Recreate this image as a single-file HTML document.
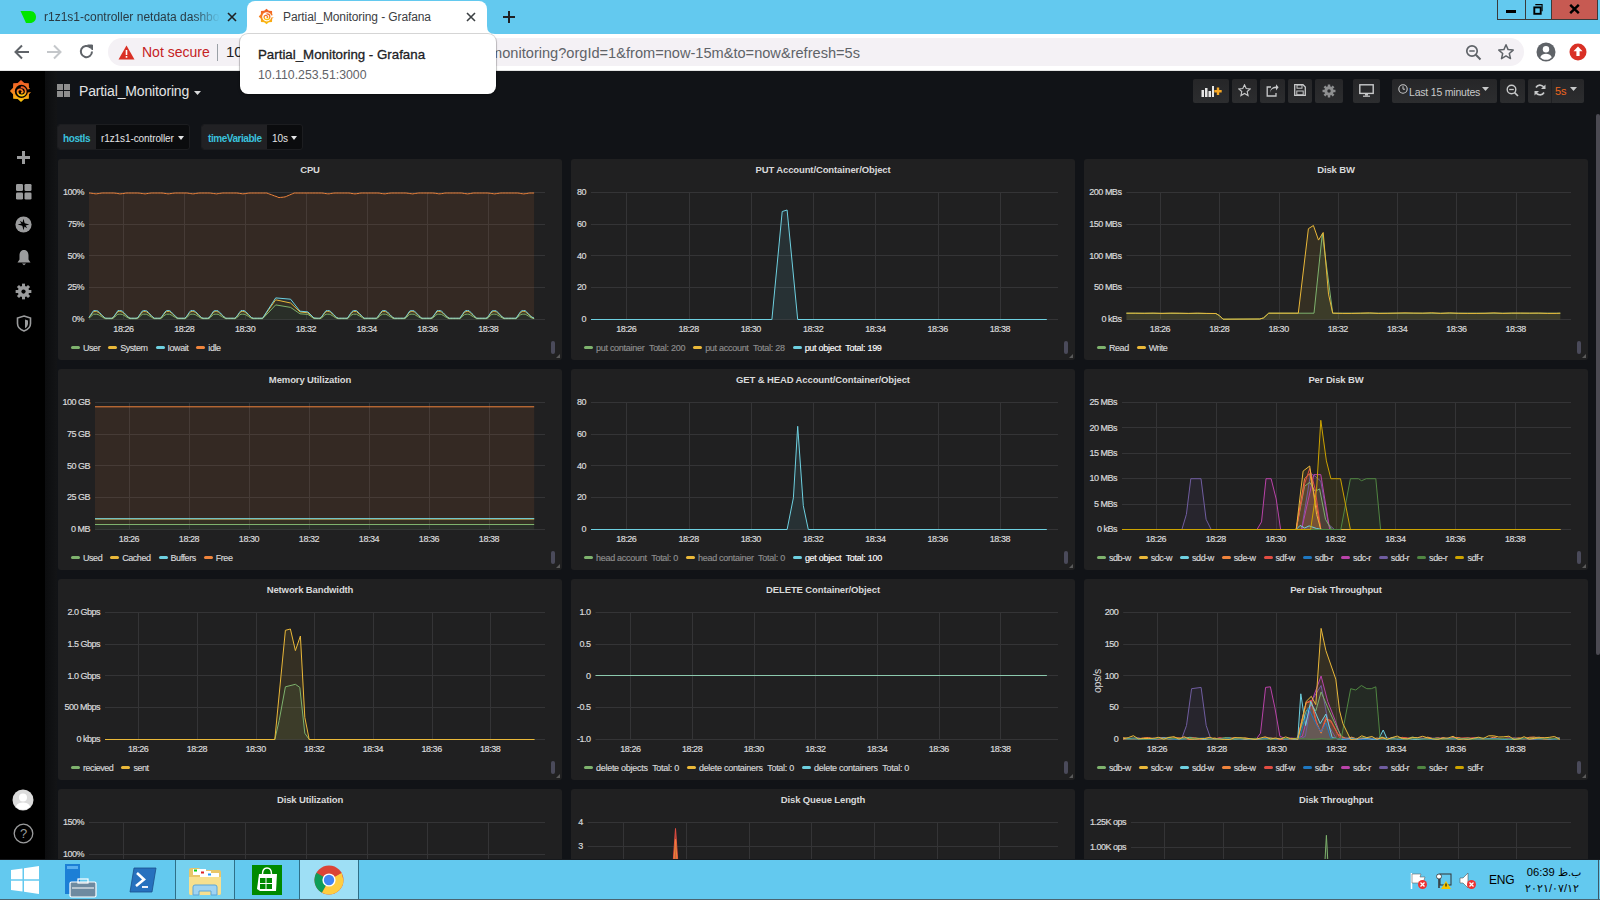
<!DOCTYPE html><html><head><meta charset="utf-8"><style>
*{box-sizing:border-box;margin:0;padding:0}
html,body{width:1600px;height:900px;overflow:hidden;background:#111317;font-family:"Liberation Sans", sans-serif}
.abs{position:absolute}
#tabs{position:absolute;left:0;top:0;width:1600px;height:34px;background:#63c9ef}
#toolbar{position:absolute;left:0;top:34px;width:1600px;height:37px;background:#fff;border-bottom:1px solid #e3e3e3}
#omni{position:absolute;left:108px;top:38px;width:1416px;height:28px;border-radius:14px;background:#f4f1f5}
#graf{position:absolute;left:0;top:71px;width:1600px;height:789px;background:#111317;overflow:hidden}
#side{position:absolute;left:0;top:71px;width:45px;height:789px;background:#000}
#sideshade{position:absolute;left:45px;top:71px;width:12px;height:789px;background:linear-gradient(90deg,#0c0d0f,#131416)}
.panel{position:absolute;background:#202021;border-radius:3px;overflow:hidden}
.ptitle{position:absolute;left:0;top:5.3px;width:100%;text-align:center;color:#d8d9da;font-weight:bold;font-size:9.5px;letter-spacing:-0.12px;line-height:12px}
.chart{position:absolute;left:0;top:0}
.g{stroke:#343436;stroke-width:1}
.yl{fill:#d8d9da;stroke:#d8d9da;stroke-width:0.2px;font-size:9px;letter-spacing:-0.5px;text-anchor:end;font-family:"Liberation Sans", sans-serif}
.xl{fill:#d8d9da;stroke:#d8d9da;stroke-width:0.2px;font-size:9px;letter-spacing:-0.45px;text-anchor:middle;font-family:"Liberation Sans", sans-serif}
.yrot{fill:#d8d9da;font-size:10.5px;letter-spacing:-0.2px;text-anchor:middle;font-family:"Liberation Sans", sans-serif}
.legend{position:absolute;left:13px;top:184px;height:11px;white-space:nowrap;font-size:9px;letter-spacing:-0.45px;color:#d8d9da;line-height:11px;-webkit-text-stroke:0.15px currentColor}
.li{display:inline-block;margin-right:8px}
.li.hid{color:#8e8e8e}
.li.bold{color:#fff}
.tot{font-weight:inherit;margin-left:4.5px}
.legend.w{letter-spacing:-0.28px}
.li i{display:inline-block;width:9px;height:3px;border-radius:2px;vertical-align:middle;margin-right:3px;position:relative;top:-1px}
.lscroll{position:absolute;left:493px;top:182px;width:4px;height:13px;border-radius:2px;background:#4a4a5a}
.resz{position:absolute;left:498px;top:195px;width:0;height:0;border-left:4px solid transparent;border-bottom:4px solid #5a5a5a}
.btn{position:absolute;top:79px;height:24px;border-radius:2px;background:linear-gradient(#262628,#2c2d2f);}
</style></head><body><div id="tabs"></div><svg class="abs" style="left:19px;top:10px" width="18" height="14" viewBox="0 0 18 14"><path d="M1.5 1 L11 1 C15 1 17 4 17 7 C17 10.5 14.5 13 11 13 L7 13 Z" fill="#00e600"/></svg><div class="abs" style="left:44px;top:9px;font-size:12px;line-height:16px;color:#2a3a44;white-space:nowrap;width:176px;overflow:hidden;-webkit-mask-image:linear-gradient(90deg,#000 85%,transparent)">r1z1s1-controller netdata dashboard</div><svg class="abs" style="left:227px;top:12px" width="10" height="10" viewBox="0 0 10 10"><path d="M1 1L9 9M9 1L1 9" stroke="#202124" stroke-width="1.6"/></svg><div class="abs" style="left:247px;top:1px;width:240px;height:33px;background:#fff;border-radius:8px 8px 0 0"></div><svg class="abs" style="left:239px;top:26px" width="8" height="8"><path d="M0 8 Q8 8 8 0 L8 8Z" fill="#fff"/></svg><svg class="abs" style="left:487px;top:26px" width="8" height="8"><path d="M0 0 Q0 8 8 8 L0 8Z" fill="#fff"/></svg><svg width="17" height="17" viewBox="0 0 24 25" style="position:absolute;left:258px;top:8px">
<defs><linearGradient id="lgt" x1="0" y1="0" x2="0" y2="1"><stop offset="0" stop-color="#f05a28"/><stop offset="0.5" stop-color="#f57f20"/><stop offset="1" stop-color="#fbca0a"/></linearGradient>
<mask id="mkt"><rect width="24" height="25" fill="#fff"/><circle cx="12.4" cy="12.9" r="6.8" fill="#000"/><path d="M17.5 11.5L24.5 9.5V13.5L18.5 14Z" fill="#000"/></mask></defs>
<path mask="url(#mkt)" fill="url(#lgt)" d="M12.00,1.00 L15.44,4.19 L20.13,4.37 L20.31,9.06 L23.50,12.50 L20.31,15.94 L20.13,20.63 L15.44,20.81 L12.00,24.00 L8.56,20.81 L3.87,20.63 L3.69,15.94 L0.50,12.50 L3.69,9.06 L3.87,4.37 L8.56,4.19Z"/>
<path d="M12.6 8.6 A4.3 4.3 0 1 1 8.4 13.6 A2.6 2.6 0 0 1 13.4 12.4 A1 1 0 0 1 12.8 14.2" fill="none" stroke="url(#lgt)" stroke-width="1.9" stroke-linecap="round"/>
</svg><div class="abs" style="left:283px;top:9px;font-size:12px;letter-spacing:-0.1px;line-height:16px;color:#3c4043;white-space:nowrap">Partial_Monitoring - Grafana</div><svg class="abs" style="left:466px;top:12px" width="10" height="10" viewBox="0 0 10 10"><path d="M1 1L9 9M9 1L1 9" stroke="#3c4043" stroke-width="1.6"/></svg><svg class="abs" style="left:502px;top:10px" width="14" height="14" viewBox="0 0 14 14"><path d="M7 1V13M1 7H13" stroke="#202124" stroke-width="2"/></svg><div class="abs" style="left:1497px;top:0;width:101px;height:20px;border:1px solid #3a3a3a;border-top:none;background:#63c9ef"></div><div class="abs" style="left:1525px;top:0;width:1px;height:20px;background:#3a3a3a"></div><div class="abs" style="left:1551px;top:0;width:46px;height:19px;background:#c75a52;border-left:1px solid #3a3a3a"></div><div class="abs" style="left:1506px;top:10px;width:10px;height:3px;background:#000"></div><svg class="abs" style="left:1532px;top:3px" width="12" height="12" viewBox="0 0 12 12"><rect x="2.3" y="4.4" width="6.4" height="6.4" fill="none" stroke="#000" stroke-width="1.9"/><path d="M3.3 1.6H10.1V8.2" fill="none" stroke="#000" stroke-width="1.1"/></svg><svg class="abs" style="left:1569px;top:4px" width="11" height="10" viewBox="0 0 11 10"><path d="M1.2 0.8L9.8 9.2M9.8 0.8L1.2 9.2" stroke="#000" stroke-width="2.4"/></svg><div id="toolbar"></div><svg class="abs" style="left:14px;top:44px" width="16" height="16" viewBox="0 0 16 16"><path d="M15 8H2M8 1.5L1.5 8L8 14.5" fill="none" stroke="#5f6368" stroke-width="2"/></svg><svg class="abs" style="left:46px;top:44px" width="16" height="16" viewBox="0 0 16 16"><path d="M1 8H14M8 1.5L14.5 8L8 14.5" fill="none" stroke="#c4c7ca" stroke-width="2"/></svg><svg class="abs" style="left:78px;top:43px" width="17" height="17" viewBox="0 0 17 17"><path d="M14 8.5A5.6 5.6 0 1 1 12.3 4.5" fill="none" stroke="#5f6368" stroke-width="2"/><path d="M9.5 2H14.5V7Z" fill="#5f6368" stroke="#5f6368" stroke-width="1"/></svg><div id="omni"></div><svg class="abs" style="left:118px;top:45px" width="17" height="15" viewBox="0 0 17 15"><path d="M8.5 0.5L16.5 14.5H0.5Z" fill="#d93025"/><rect x="7.7" y="5" width="1.6" height="5" fill="#fff"/><rect x="7.7" y="11" width="1.6" height="1.7" fill="#fff"/></svg><div class="abs" style="left:142px;top:43px;font-size:14px;line-height:18px;color:#c5221f;white-space:nowrap">Not secure</div><div class="abs" style="left:217px;top:44px;width:1px;height:17px;background:#9aa0a6"></div><div class="abs" style="left:226px;top:42px;font-size:15px;line-height:20px;color:#202124;white-space:nowrap">10</div><div class="abs" style="left:300px;top:42.5px;width:560px;text-align:right;font-size:14.6px;line-height:20px;color:#5f6368;white-space:nowrap">partial_monitoring?orgId=1&amp;from=now-15m&amp;to=now&amp;refresh=5s</div><svg class="abs" style="left:1465px;top:44px" width="17" height="17" viewBox="0 0 17 17"><circle cx="7" cy="7" r="5.2" fill="none" stroke="#5f6368" stroke-width="1.7"/><path d="M10.8 10.8L15.5 15.5" stroke="#5f6368" stroke-width="2"/><path d="M4.3 7H9.7" stroke="#5f6368" stroke-width="1.5"/></svg><svg class="abs" style="left:1497px;top:43px" width="18" height="18" viewBox="0 0 18 18"><path d="M9 1.8L11.1 6.6L16.2 7.1L12.3 10.5L13.5 15.6L9 12.9L4.5 15.6L5.7 10.5L1.8 7.1L6.9 6.6Z" fill="none" stroke="#5f6368" stroke-width="1.5" stroke-linejoin="round"/></svg><svg class="abs" style="left:1536px;top:42px" width="20" height="20" viewBox="0 0 20 20"><circle cx="10" cy="10" r="9.5" fill="#5f6368"/><circle cx="10" cy="7.3" r="3.2" fill="#fff"/><path d="M4.2 15.2C5.5 12.6 7.6 11.8 10 11.8C12.4 11.8 14.5 12.6 15.8 15.2C14.4 16.9 12.3 17.8 10 17.8C7.7 17.8 5.6 16.9 4.2 15.2Z" fill="#fff"/></svg><svg class="abs" style="left:1569px;top:43px" width="18" height="18" viewBox="0 0 18 18"><circle cx="9" cy="9" r="8.5" fill="#d93025"/><path d="M9 3.5L13.5 8.2H10.6V13H7.4V8.2H4.5Z" fill="#fff"/></svg><div id="graf"></div><div id="side"></div><div id="sideshade"></div><svg width="24" height="24" viewBox="0 0 24 25" style="position:absolute;left:9px;top:79px">
<defs><linearGradient id="lgs" x1="0" y1="0" x2="0" y2="1"><stop offset="0" stop-color="#f05a28"/><stop offset="0.5" stop-color="#f57f20"/><stop offset="1" stop-color="#fbca0a"/></linearGradient>
<mask id="mks"><rect width="24" height="25" fill="#fff"/><circle cx="12.4" cy="12.9" r="6.8" fill="#000"/><path d="M17.5 11.5L24.5 9.5V13.5L18.5 14Z" fill="#000"/></mask></defs>
<path mask="url(#mks)" fill="url(#lgs)" d="M12.00,1.00 L15.44,4.19 L20.13,4.37 L20.31,9.06 L23.50,12.50 L20.31,15.94 L20.13,20.63 L15.44,20.81 L12.00,24.00 L8.56,20.81 L3.87,20.63 L3.69,15.94 L0.50,12.50 L3.69,9.06 L3.87,4.37 L8.56,4.19Z"/>
<path d="M12.6 8.6 A4.3 4.3 0 1 1 8.4 13.6 A2.6 2.6 0 0 1 13.4 12.4 A1 1 0 0 1 12.8 14.2" fill="none" stroke="url(#lgs)" stroke-width="1.9" stroke-linecap="round"/>
</svg><svg class="abs" style="left:16px;top:150px" width="15" height="15" viewBox="0 0 15 15"><path d="M7.5 1V14M1 7.5H14" stroke="#9b9c9d" stroke-width="3"/></svg><svg class="abs" style="left:16px;top:184px" width="16" height="16" viewBox="0 0 16 16"><rect x="0" y="0" width="7" height="7" rx="1.3" fill="#9b9c9d"/><rect x="8.5" y="0" width="7" height="7" rx="1.3" fill="#9b9c9d"/><rect x="0" y="8.5" width="7" height="7" rx="1.3" fill="#9b9c9d"/><rect x="8.5" y="8.5" width="7" height="7" rx="1.3" fill="#9b9c9d"/></svg><svg class="abs" style="left:15px;top:216px" width="17" height="17" viewBox="0 0 16 16"><circle cx="8" cy="8" r="7.6" fill="#9b9c9d"/><path d="M8 2.5L9.1 6.9L13.5 8L9.1 9.1L8 13.5L6.9 9.1L2.5 8L6.9 6.9Z" fill="#000"/><path d="M4.5 4.5L9 7L11.5 11.5L7 9Z" fill="#000"/></svg><svg class="abs" style="left:16px;top:249px" width="16" height="17" viewBox="0 0 16 17"><path d="M8 1C4.8 1 3.5 3.5 3.5 6.5V10.5L1.5 13.5H14.5L12.5 10.5V6.5C12.5 3.5 11.2 1 8 1Z" fill="#9b9c9d"/><path d="M6 14.5H10L8 16.3Z" fill="#9b9c9d"/></svg><svg width="17" height="17" viewBox="0 0 16 16" style="position:absolute;left:15px;top:283px"><rect x="6.6" y="0.6" width="2.8" height="3.2" fill="#9b9c9d" transform="rotate(0 8 8)"/><rect x="6.6" y="0.6" width="2.8" height="3.2" fill="#9b9c9d" transform="rotate(45 8 8)"/><rect x="6.6" y="0.6" width="2.8" height="3.2" fill="#9b9c9d" transform="rotate(90 8 8)"/><rect x="6.6" y="0.6" width="2.8" height="3.2" fill="#9b9c9d" transform="rotate(135 8 8)"/><rect x="6.6" y="0.6" width="2.8" height="3.2" fill="#9b9c9d" transform="rotate(180 8 8)"/><rect x="6.6" y="0.6" width="2.8" height="3.2" fill="#9b9c9d" transform="rotate(225 8 8)"/><rect x="6.6" y="0.6" width="2.8" height="3.2" fill="#9b9c9d" transform="rotate(270 8 8)"/><rect x="6.6" y="0.6" width="2.8" height="3.2" fill="#9b9c9d" transform="rotate(315 8 8)"/><circle cx="8" cy="8" r="5.3" fill="#9b9c9d"/><circle cx="8" cy="8" r="2" fill="#000"/></svg><svg class="abs" style="left:16px;top:315px" width="16" height="17" viewBox="0 0 16 17"><path d="M8 1L14.5 3V8.5C14.5 12 11.5 14.8 8 16C4.5 14.8 1.5 12 1.5 8.5V3Z" fill="none" stroke="#9b9c9d" stroke-width="1.6"/><path d="M9 4.5L12 5.5V8.5C12 10.8 10.5 12.5 9 13.3Z" fill="#9b9c9d"/></svg><svg class="abs" style="left:12px;top:789px" width="22" height="22" viewBox="0 0 22 22"><circle cx="11" cy="11" r="10.5" fill="#dcdcdc"/><circle cx="11" cy="8.5" r="4" fill="#fff"/><path d="M3.8 17.5C5.5 14.5 8 13.6 11 13.6C14 13.6 16.5 14.5 18.2 17.5C16.5 19.5 14 20.8 11 20.8C8 20.8 5.5 19.5 3.8 17.5Z" fill="#fff"/></svg><svg class="abs" style="left:13px;top:823px" width="21" height="21" viewBox="0 0 21 21"><circle cx="10.5" cy="10.5" r="9.3" fill="none" stroke="#9b9c9d" stroke-width="1.3"/><text x="10.5" y="15" text-anchor="middle" font-size="13" fill="#9b9c9d" font-family="Liberation Sans">?</text></svg><svg class="abs" style="left:57px;top:84px" width="13" height="13" viewBox="0 0 13 13"><rect x="0" y="0" width="6" height="6" fill="#8e8e8e"/><rect x="7" y="0" width="6" height="6" fill="#8e8e8e"/><rect x="0" y="7" width="6" height="6" fill="#8e8e8e"/><rect x="7" y="7" width="6" height="6" fill="#8e8e8e"/></svg><div class="abs" style="left:79px;top:82px;font-size:14px;letter-spacing:-0.15px;line-height:18px;color:#e3e4e5;white-space:nowrap">Partial_Monitoring</div><svg class="abs" style="left:194px;top:91px" width="7" height="4"><path d="M0 0H7L3.5 4Z" fill="#d8d9da"/></svg><div class="btn" style="left:1193px;width:36px"></div><div class="btn" style="left:1232px;width:25px"></div><div class="btn" style="left:1260px;width:25px"></div><div class="btn" style="left:1288px;width:24px"></div><div class="btn" style="left:1315px;width:28px"></div><div class="btn" style="left:1353px;width:27px"></div><div class="btn" style="left:1392px;width:105px"></div><div class="btn" style="left:1500px;width:25px"></div><div class="btn" style="left:1528px;width:56px"></div><div class="abs" style="left:1551px;top:79px;width:1px;height:24px;background:#1f2023"></div><svg class="abs" style="left:1201px;top:85px" width="21" height="12" viewBox="0 0 21 12"><rect x="0.5" y="5" width="2.5" height="7" fill="#e6e6e6"/><rect x="4" y="3" width="2.5" height="9" fill="#e6e6e6"/><rect x="7.5" y="6" width="2.5" height="6" fill="#e6e6e6"/><rect x="11" y="1" width="2" height="11" fill="#e6e6e6"/><path d="M17 2.5V10M13.3 6.2H20.7" stroke="#f5a623" stroke-width="2.4"/></svg><svg class="abs" style="left:1238px;top:84px" width="13" height="13" viewBox="0 0 13 13"><path d="M6.5 0.8L8.2 4.5L12.2 4.9L9.2 7.5L10.1 11.6L6.5 9.5L2.9 11.6L3.8 7.5L0.8 4.9L4.8 4.5Z" fill="none" stroke="#c8c9ca" stroke-width="1.1"/></svg><svg class="abs" style="left:1266px;top:84px" width="13" height="13" viewBox="0 0 13 13"><path d="M5 3H1.2V12H10V9" fill="none" stroke="#c8c9ca" stroke-width="1.3"/><path d="M4 9C4.5 5.5 7 4.2 10 4.2V6.5L12.6 3.3L10 0.3V2.4C6 2.6 4 5.5 4 9Z" fill="#c8c9ca"/></svg><svg class="abs" style="left:1294px;top:84px" width="12" height="12" viewBox="0 0 12 12"><path d="M0.7 0.7H9L11.3 3V11.3H0.7Z" fill="none" stroke="#c8c9ca" stroke-width="1.3"/><rect x="3" y="1" width="5" height="3.2" fill="none" stroke="#c8c9ca" stroke-width="1"/><rect x="2.8" y="7" width="6.4" height="3.8" fill="none" stroke="#c8c9ca" stroke-width="1"/></svg><svg width="14" height="14" viewBox="0 0 16 16" style="position:absolute;left:1322px;top:84px"><rect x="6.6" y="0.6" width="2.8" height="3.2" fill="#8e8f90" transform="rotate(0 8 8)"/><rect x="6.6" y="0.6" width="2.8" height="3.2" fill="#8e8f90" transform="rotate(45 8 8)"/><rect x="6.6" y="0.6" width="2.8" height="3.2" fill="#8e8f90" transform="rotate(90 8 8)"/><rect x="6.6" y="0.6" width="2.8" height="3.2" fill="#8e8f90" transform="rotate(135 8 8)"/><rect x="6.6" y="0.6" width="2.8" height="3.2" fill="#8e8f90" transform="rotate(180 8 8)"/><rect x="6.6" y="0.6" width="2.8" height="3.2" fill="#8e8f90" transform="rotate(225 8 8)"/><rect x="6.6" y="0.6" width="2.8" height="3.2" fill="#8e8f90" transform="rotate(270 8 8)"/><rect x="6.6" y="0.6" width="2.8" height="3.2" fill="#8e8f90" transform="rotate(315 8 8)"/><circle cx="8" cy="8" r="5.3" fill="#8e8f90"/><circle cx="8" cy="8" r="2" fill="#2a2b2d"/></svg><svg class="abs" style="left:1359px;top:84px" width="15" height="13" viewBox="0 0 15 13"><rect x="0.8" y="0.8" width="13.4" height="8.6" fill="none" stroke="#c8c9ca" stroke-width="1.4"/><rect x="6" y="10" width="3" height="1.6" fill="#c8c9ca"/><rect x="4" y="11.6" width="7" height="1.2" fill="#c8c9ca"/></svg><svg class="abs" style="left:1398px;top:84px" width="10" height="10" viewBox="0 0 10 10"><circle cx="5" cy="5" r="4.2" fill="none" stroke="#c8c9ca" stroke-width="1.1"/><path d="M5 2.2V5.2H7" fill="none" stroke="#c8c9ca" stroke-width="1"/></svg><div class="abs" style="left:1409px;top:85.5px;font-size:10.5px;letter-spacing:-0.2px;line-height:13px;color:#c8c9ca;white-space:nowrap">Last 15 minutes</div><svg class="abs" style="left:1482px;top:87px" width="7" height="4"><path d="M0 0H7L3.5 4Z" fill="#c8c9ca"/></svg><svg class="abs" style="left:1506px;top:84px" width="13" height="13" viewBox="0 0 13 13"><circle cx="5.5" cy="5.5" r="4.3" fill="none" stroke="#c8c9ca" stroke-width="1.4"/><path d="M8.6 8.6L12 12" stroke="#c8c9ca" stroke-width="1.6"/><path d="M3.2 5.5H7.8" stroke="#c8c9ca" stroke-width="1.3"/></svg><svg class="abs" style="left:1534px;top:84px" width="12" height="12" viewBox="0 0 12 12"><path d="M10.3 4.5A4.5 4.5 0 0 0 2 3.5M1.7 7.5A4.5 4.5 0 0 0 10 8.5" fill="none" stroke="#c8c9ca" stroke-width="1.6"/><path d="M11.5 0.5V5H7Z" fill="#c8c9ca"/><path d="M0.5 11.5V7H5Z" fill="#c8c9ca"/></svg><div class="abs" style="left:1555px;top:84px;font-size:11px;line-height:14px;color:#f0661e;white-space:nowrap">5s</div><svg class="abs" style="left:1570px;top:87px" width="7" height="4"><path d="M0 0H7L3.5 4Z" fill="#c8c9ca"/></svg><div class="abs" style="left:57px;top:124px;width:133px;height:26px;border:1px solid #1c1d20;border-radius:3px;background:#0b0c0e;overflow:hidden"><div style="position:absolute;left:0;top:0;width:38px;height:26px;background:#212124"></div></div><div class="abs" style="left:63px;top:131.5px;font-size:10px;font-weight:bold;letter-spacing:-0.4px;line-height:13px;color:#3ac1dc">hostIs</div><div class="abs" style="left:101px;top:131.5px;font-size:10px;letter-spacing:-0.1px;line-height:13px;color:#e3e4e5;white-space:nowrap">r1z1s1-controller</div><svg class="abs" style="left:178px;top:136px" width="6" height="4"><path d="M0 0H6L3 4Z" fill="#e3e4e5"/></svg><div class="abs" style="left:201px;top:124px;width:102px;height:26px;border:1px solid #1c1d20;border-radius:3px;background:#0b0c0e;overflow:hidden"><div style="position:absolute;left:0;top:0;width:65px;height:26px;background:#212124"></div></div><div class="abs" style="left:208px;top:131.5px;font-size:10px;font-weight:bold;letter-spacing:-0.45px;line-height:13px;color:#3ac1dc;white-space:nowrap">timeVariable</div><div class="abs" style="left:272px;top:131.5px;font-size:10px;line-height:13px;color:#e3e4e5;white-space:nowrap">10s</div><svg class="abs" style="left:291px;top:136px" width="6" height="4"><path d="M0 0H6L3 4Z" fill="#e3e4e5"/></svg><div class="abs" style="left:1596px;top:114px;width:4px;height:541px;border-radius:2px;background:#4b4a52"></div><div class="panel" style="left:58px;top:159px;width:504px;height:201px"><div class="ptitle">CPU</div><svg class="chart" width="504" height="201" viewBox="0 0 504 201"><line x1="31" y1="33.5" x2="487" y2="33.5" class="g"/><text x="26" y="36.2" class="yl">100%</text><line x1="31" y1="65.5" x2="487" y2="65.5" class="g"/><text x="26" y="68.0" class="yl">75%</text><line x1="31" y1="96.5" x2="487" y2="96.5" class="g"/><text x="26" y="99.7" class="yl">50%</text><line x1="31" y1="128.5" x2="487" y2="128.5" class="g"/><text x="26" y="131.4" class="yl">25%</text><line x1="31" y1="160.5" x2="487" y2="160.5" class="g"/><text x="26" y="163.2" class="yl">0%</text><line x1="65.5" y1="33" x2="65.5" y2="160" class="g"/><text x="65.5" y="173" class="xl">18:26</text><line x1="126.5" y1="33" x2="126.5" y2="160" class="g"/><text x="126.3" y="173" class="xl">18:28</text><line x1="187.5" y1="33" x2="187.5" y2="160" class="g"/><text x="187.1" y="173" class="xl">18:30</text><line x1="248.5" y1="33" x2="248.5" y2="160" class="g"/><text x="247.9" y="173" class="xl">18:32</text><line x1="309.5" y1="33" x2="309.5" y2="160" class="g"/><text x="308.7" y="173" class="xl">18:34</text><line x1="369.5" y1="33" x2="369.5" y2="160" class="g"/><text x="369.5" y="173" class="xl">18:36</text><line x1="430.5" y1="33" x2="430.5" y2="160" class="g"/><text x="430.3" y="173" class="xl">18:38</text><path d="M31.0,160.5 L31.0,159.2 L32.5,157.9 L34.0,156.5 L35.6,155.2 L37.1,155.2 L38.6,155.2 L40.1,155.5 L41.6,156.4 L43.2,157.4 L44.7,158.3 L46.2,159.2 L47.7,159.7 L49.2,159.7 L50.8,159.7 L52.3,159.7 L53.8,159.7 L55.3,159.2 L56.8,157.9 L58.4,156.5 L59.9,155.2 L61.4,155.2 L62.9,155.2 L64.4,155.5 L66.0,156.4 L67.5,157.4 L69.0,158.3 L70.5,159.2 L72.0,159.7 L73.6,159.7 L75.1,159.7 L76.6,159.7 L78.1,159.7 L79.6,159.5 L81.2,158.1 L82.7,156.8 L84.2,155.4 L85.7,155.2 L87.2,155.2 L88.8,155.3 L90.3,156.3 L91.8,157.2 L93.3,158.1 L94.8,159.0 L96.4,159.7 L97.9,159.7 L99.4,159.7 L100.9,159.7 L102.4,159.7 L104.0,158.7 L105.5,157.3 L107.0,156.0 L108.5,155.2 L110.0,155.2 L111.6,155.2 L113.1,155.9 L114.6,156.8 L116.1,157.7 L117.6,158.6 L119.2,159.6 L120.7,159.7 L122.2,159.7 L123.7,159.7 L125.2,159.7 L126.8,159.7 L128.3,158.9 L129.8,157.6 L131.3,156.2 L132.8,155.2 L134.4,155.2 L135.9,155.2 L137.4,155.7 L138.9,156.6 L140.4,157.5 L142.0,158.5 L143.5,159.4 L145.0,159.7 L146.5,159.7 L148.0,159.7 L149.6,159.7 L151.1,159.5 L152.6,158.1 L154.1,156.8 L155.6,155.4 L157.2,155.2 L158.7,155.2 L160.2,155.3 L161.7,156.3 L163.2,157.2 L164.8,158.1 L166.3,159.0 L167.8,159.7 L169.3,159.7 L170.8,159.7 L172.4,159.7 L173.9,159.7 L175.4,159.7 L176.9,159.7 L178.4,158.9 L180.0,157.6 L181.5,156.2 L183.0,155.2 L184.5,155.2 L186.0,155.2 L187.6,155.7 L189.1,156.6 L190.6,157.5 L192.1,158.5 L193.6,159.4 L195.2,159.7 L196.7,159.7 L198.2,159.7 L199.7,159.7 L201.2,159.7 L201.2,159.7 L204.6,159.7 L217.7,145.9 L232.6,148.4 L242.0,154.8 L249.9,155.4 L256.0,159.6 L259.0,159.7 L260.5,159.7 L262.0,159.7 L263.6,158.9 L265.1,157.6 L266.6,156.2 L268.1,155.2 L269.6,155.2 L271.2,155.2 L272.7,155.7 L274.2,156.6 L275.7,157.5 L277.2,158.5 L278.8,159.4 L280.3,159.7 L281.8,159.7 L283.3,159.7 L284.8,159.7 L286.4,159.7 L287.9,159.7 L289.4,159.7 L290.9,158.4 L292.4,157.0 L294.0,155.7 L295.5,155.2 L297.0,155.2 L298.5,155.2 L300.0,156.1 L301.6,157.0 L303.1,157.9 L304.6,158.8 L306.1,159.7 L307.6,159.7 L309.2,159.7 L310.7,159.7 L312.2,159.7 L313.7,159.7 L315.2,159.7 L316.8,159.7 L318.3,159.7 L319.8,158.9 L321.3,157.6 L322.8,156.2 L324.4,155.2 L325.9,155.2 L327.4,155.2 L328.9,155.7 L330.4,156.6 L332.0,157.5 L333.5,158.5 L335.0,159.4 L336.5,159.7 L338.0,159.7 L339.6,159.7 L341.1,159.7 L342.6,159.7 L344.1,159.7 L345.6,159.7 L347.2,159.5 L348.7,158.1 L350.2,156.8 L351.7,155.4 L353.2,155.2 L354.8,155.2 L356.3,155.3 L357.8,156.3 L359.3,157.2 L360.8,158.1 L362.4,159.0 L363.9,159.7 L365.4,159.7 L366.9,159.7 L368.4,159.7 L370.0,159.7 L371.5,159.7 L373.0,159.7 L374.5,159.2 L376.0,157.9 L377.6,156.5 L379.1,155.2 L380.6,155.2 L382.1,155.2 L383.6,155.5 L385.2,156.4 L386.7,157.4 L388.2,158.3 L389.7,159.2 L391.2,159.7 L392.8,159.7 L394.3,159.7 L395.8,159.7 L397.3,159.7 L398.8,159.7 L400.4,159.7 L401.9,159.7 L403.4,158.4 L404.9,157.0 L406.4,155.7 L408.0,155.2 L409.5,155.2 L411.0,155.2 L412.5,156.1 L414.0,157.0 L415.6,157.9 L417.1,158.8 L418.6,159.7 L420.1,159.7 L421.6,159.7 L423.2,159.7 L424.7,159.7 L426.2,159.7 L427.7,159.7 L429.2,159.5 L430.8,158.1 L432.3,156.8 L433.8,155.4 L435.3,155.2 L436.8,155.2 L438.4,155.3 L439.9,156.3 L441.4,157.2 L442.9,158.1 L444.4,159.0 L446.0,159.7 L447.5,159.7 L449.0,159.7 L450.5,159.7 L452.0,159.7 L453.6,159.7 L455.1,159.7 L456.6,159.7 L458.1,159.7 L459.6,158.4 L461.2,157.0 L462.7,155.7 L464.2,155.2 L465.7,155.2 L467.2,155.2 L468.8,156.1 L470.3,157.0 L471.8,157.9 L473.3,158.8 L476.1,159.7 L476.1,160.5 Z" fill="#7EB26D" fill-opacity="0.1" stroke="none"/><path d="M31.0,158.6 L32.5,156.6 L34.0,154.6 L35.6,152.6 L37.1,152.6 L38.6,152.6 L40.1,153.2 L41.6,154.5 L43.2,155.9 L44.7,157.2 L46.2,158.5 L47.7,159.4 L49.2,159.4 L50.8,159.4 L52.3,159.4 L53.8,159.4 L55.3,158.6 L56.8,156.6 L58.4,154.6 L59.9,152.6 L61.4,152.6 L62.9,152.6 L64.4,153.2 L66.0,154.5 L67.5,155.9 L69.0,157.2 L70.5,158.5 L72.0,159.4 L73.6,159.4 L75.1,159.4 L76.6,159.4 L78.1,159.4 L79.6,159.0 L81.2,157.0 L82.7,155.0 L84.2,153.0 L85.7,152.6 L87.2,152.6 L88.8,152.9 L90.3,154.2 L91.8,155.6 L93.3,156.9 L94.8,158.3 L96.4,159.4 L97.9,159.4 L99.4,159.4 L100.9,159.4 L102.4,159.4 L104.0,157.8 L105.5,155.8 L107.0,153.8 L108.5,152.6 L110.0,152.6 L111.6,152.6 L113.1,153.7 L114.6,155.0 L116.1,156.4 L117.6,157.7 L119.2,159.1 L120.7,159.4 L122.2,159.4 L123.7,159.4 L125.2,159.4 L126.8,159.4 L128.3,158.2 L129.8,156.2 L131.3,154.2 L132.8,152.6 L134.4,152.6 L135.9,152.6 L137.4,153.4 L138.9,154.8 L140.4,156.1 L142.0,157.5 L143.5,158.8 L145.0,159.4 L146.5,159.4 L148.0,159.4 L149.6,159.4 L151.1,159.0 L152.6,157.0 L154.1,155.0 L155.6,153.0 L157.2,152.6 L158.7,152.6 L160.2,152.9 L161.7,154.2 L163.2,155.6 L164.8,156.9 L166.3,158.3 L167.8,159.4 L169.3,159.4 L170.8,159.4 L172.4,159.4 L173.9,159.4 L175.4,159.4 L176.9,159.4 L178.4,158.2 L180.0,156.2 L181.5,154.2 L183.0,152.6 L184.5,152.6 L186.0,152.6 L187.6,153.4 L189.1,154.8 L190.6,156.1 L192.1,157.5 L193.6,158.8 L195.2,159.4 L196.7,159.4 L198.2,159.4 L199.7,159.4 L201.2,159.4 L201.2,159.4 L204.6,159.4 L217.7,140.8 L232.6,144.0 L242.0,152.9 L249.9,153.8 L256.0,159.2 L259.0,159.4 L260.5,159.4 L262.0,159.4 L263.6,158.2 L265.1,156.2 L266.6,154.2 L268.1,152.6 L269.6,152.6 L271.2,152.6 L272.7,153.4 L274.2,154.8 L275.7,156.1 L277.2,157.5 L278.8,158.8 L280.3,159.4 L281.8,159.4 L283.3,159.4 L284.8,159.4 L286.4,159.4 L287.9,159.4 L289.4,159.4 L290.9,157.4 L292.4,155.4 L294.0,153.4 L295.5,152.6 L297.0,152.6 L298.5,152.6 L300.0,154.0 L301.6,155.3 L303.1,156.7 L304.6,158.0 L306.1,159.4 L307.6,159.4 L309.2,159.4 L310.7,159.4 L312.2,159.4 L313.7,159.4 L315.2,159.4 L316.8,159.4 L318.3,159.4 L319.8,158.2 L321.3,156.2 L322.8,154.2 L324.4,152.6 L325.9,152.6 L327.4,152.6 L328.9,153.4 L330.4,154.8 L332.0,156.1 L333.5,157.5 L335.0,158.8 L336.5,159.4 L338.0,159.4 L339.6,159.4 L341.1,159.4 L342.6,159.4 L344.1,159.4 L345.6,159.4 L347.2,159.0 L348.7,157.0 L350.2,155.0 L351.7,153.0 L353.2,152.6 L354.8,152.6 L356.3,152.9 L357.8,154.2 L359.3,155.6 L360.8,156.9 L362.4,158.3 L363.9,159.4 L365.4,159.4 L366.9,159.4 L368.4,159.4 L370.0,159.4 L371.5,159.4 L373.0,159.4 L374.5,158.6 L376.0,156.6 L377.6,154.6 L379.1,152.6 L380.6,152.6 L382.1,152.6 L383.6,153.2 L385.2,154.5 L386.7,155.9 L388.2,157.2 L389.7,158.5 L391.2,159.4 L392.8,159.4 L394.3,159.4 L395.8,159.4 L397.3,159.4 L398.8,159.4 L400.4,159.4 L401.9,159.4 L403.4,157.4 L404.9,155.4 L406.4,153.4 L408.0,152.6 L409.5,152.6 L411.0,152.6 L412.5,154.0 L414.0,155.3 L415.6,156.7 L417.1,158.0 L418.6,159.4 L420.1,159.4 L421.6,159.4 L423.2,159.4 L424.7,159.4 L426.2,159.4 L427.7,159.4 L429.2,159.0 L430.8,157.0 L432.3,155.0 L433.8,153.0 L435.3,152.6 L436.8,152.6 L438.4,152.9 L439.9,154.2 L441.4,155.6 L442.9,156.9 L444.4,158.3 L446.0,159.4 L447.5,159.4 L449.0,159.4 L450.5,159.4 L452.0,159.4 L453.6,159.4 L455.1,159.4 L456.6,159.4 L458.1,159.4 L459.6,157.4 L461.2,155.4 L462.7,153.4 L464.2,152.6 L465.7,152.6 L467.2,152.6 L468.8,154.0 L470.3,155.3 L471.8,156.7 L473.3,158.0 L476.1,159.4 L476.1,159.7 L473.3,158.8 L471.8,157.9 L470.3,157.0 L468.8,156.1 L467.2,155.2 L465.7,155.2 L464.2,155.2 L462.7,155.7 L461.2,157.0 L459.6,158.4 L458.1,159.7 L456.6,159.7 L455.1,159.7 L453.6,159.7 L452.0,159.7 L450.5,159.7 L449.0,159.7 L447.5,159.7 L446.0,159.7 L444.4,159.0 L442.9,158.1 L441.4,157.2 L439.9,156.3 L438.4,155.3 L436.8,155.2 L435.3,155.2 L433.8,155.4 L432.3,156.8 L430.8,158.1 L429.2,159.5 L427.7,159.7 L426.2,159.7 L424.7,159.7 L423.2,159.7 L421.6,159.7 L420.1,159.7 L418.6,159.7 L417.1,158.8 L415.6,157.9 L414.0,157.0 L412.5,156.1 L411.0,155.2 L409.5,155.2 L408.0,155.2 L406.4,155.7 L404.9,157.0 L403.4,158.4 L401.9,159.7 L400.4,159.7 L398.8,159.7 L397.3,159.7 L395.8,159.7 L394.3,159.7 L392.8,159.7 L391.2,159.7 L389.7,159.2 L388.2,158.3 L386.7,157.4 L385.2,156.4 L383.6,155.5 L382.1,155.2 L380.6,155.2 L379.1,155.2 L377.6,156.5 L376.0,157.9 L374.5,159.2 L373.0,159.7 L371.5,159.7 L370.0,159.7 L368.4,159.7 L366.9,159.7 L365.4,159.7 L363.9,159.7 L362.4,159.0 L360.8,158.1 L359.3,157.2 L357.8,156.3 L356.3,155.3 L354.8,155.2 L353.2,155.2 L351.7,155.4 L350.2,156.8 L348.7,158.1 L347.2,159.5 L345.6,159.7 L344.1,159.7 L342.6,159.7 L341.1,159.7 L339.6,159.7 L338.0,159.7 L336.5,159.7 L335.0,159.4 L333.5,158.5 L332.0,157.5 L330.4,156.6 L328.9,155.7 L327.4,155.2 L325.9,155.2 L324.4,155.2 L322.8,156.2 L321.3,157.6 L319.8,158.9 L318.3,159.7 L316.8,159.7 L315.2,159.7 L313.7,159.7 L312.2,159.7 L310.7,159.7 L309.2,159.7 L307.6,159.7 L306.1,159.7 L304.6,158.8 L303.1,157.9 L301.6,157.0 L300.0,156.1 L298.5,155.2 L297.0,155.2 L295.5,155.2 L294.0,155.7 L292.4,157.0 L290.9,158.4 L289.4,159.7 L287.9,159.7 L286.4,159.7 L284.8,159.7 L283.3,159.7 L281.8,159.7 L280.3,159.7 L278.8,159.4 L277.2,158.5 L275.7,157.5 L274.2,156.6 L272.7,155.7 L271.2,155.2 L269.6,155.2 L268.1,155.2 L266.6,156.2 L265.1,157.6 L263.6,158.9 L262.0,159.7 L260.5,159.7 L259.0,159.7 L256.0,159.6 L249.9,155.4 L242.0,154.8 L232.6,148.4 L217.7,145.9 L204.6,159.7 L201.2,159.7 L201.2,159.7 L199.7,159.7 L198.2,159.7 L196.7,159.7 L195.2,159.7 L193.6,159.4 L192.1,158.5 L190.6,157.5 L189.1,156.6 L187.6,155.7 L186.0,155.2 L184.5,155.2 L183.0,155.2 L181.5,156.2 L180.0,157.6 L178.4,158.9 L176.9,159.7 L175.4,159.7 L173.9,159.7 L172.4,159.7 L170.8,159.7 L169.3,159.7 L167.8,159.7 L166.3,159.0 L164.8,158.1 L163.2,157.2 L161.7,156.3 L160.2,155.3 L158.7,155.2 L157.2,155.2 L155.6,155.4 L154.1,156.8 L152.6,158.1 L151.1,159.5 L149.6,159.7 L148.0,159.7 L146.5,159.7 L145.0,159.7 L143.5,159.4 L142.0,158.5 L140.4,157.5 L138.9,156.6 L137.4,155.7 L135.9,155.2 L134.4,155.2 L132.8,155.2 L131.3,156.2 L129.8,157.6 L128.3,158.9 L126.8,159.7 L125.2,159.7 L123.7,159.7 L122.2,159.7 L120.7,159.7 L119.2,159.6 L117.6,158.6 L116.1,157.7 L114.6,156.8 L113.1,155.9 L111.6,155.2 L110.0,155.2 L108.5,155.2 L107.0,156.0 L105.5,157.3 L104.0,158.7 L102.4,159.7 L100.9,159.7 L99.4,159.7 L97.9,159.7 L96.4,159.7 L94.8,159.0 L93.3,158.1 L91.8,157.2 L90.3,156.3 L88.8,155.3 L87.2,155.2 L85.7,155.2 L84.2,155.4 L82.7,156.8 L81.2,158.1 L79.6,159.5 L78.1,159.7 L76.6,159.7 L75.1,159.7 L73.6,159.7 L72.0,159.7 L70.5,159.2 L69.0,158.3 L67.5,157.4 L66.0,156.4 L64.4,155.5 L62.9,155.2 L61.4,155.2 L59.9,155.2 L58.4,156.5 L56.8,157.9 L55.3,159.2 L53.8,159.7 L52.3,159.7 L50.8,159.7 L49.2,159.7 L47.7,159.7 L46.2,159.2 L44.7,158.3 L43.2,157.4 L41.6,156.4 L40.1,155.5 L38.6,155.2 L37.1,155.2 L35.6,155.2 L34.0,156.5 L32.5,157.9 L31.0,159.2 Z" fill="#EAB839" fill-opacity="0.1" stroke="none"/><path d="M31.0,158.3 L32.5,156.1 L34.0,153.9 L35.6,151.6 L37.1,151.6 L38.6,151.6 L40.1,152.2 L41.6,153.7 L43.2,155.3 L44.7,156.8 L46.2,158.3 L47.7,159.2 L49.2,159.2 L50.8,159.2 L52.3,159.2 L53.8,159.2 L55.3,158.3 L56.8,156.1 L58.4,153.9 L59.9,151.6 L61.4,151.6 L62.9,151.6 L64.4,152.2 L66.0,153.7 L67.5,155.3 L69.0,156.8 L70.5,158.3 L72.0,159.2 L73.6,159.2 L75.1,159.2 L76.6,159.2 L78.1,159.2 L79.6,158.8 L81.2,156.5 L82.7,154.3 L84.2,152.1 L85.7,151.6 L87.2,151.6 L88.8,151.9 L90.3,153.4 L91.8,155.0 L93.3,156.5 L94.8,158.0 L96.4,159.2 L97.9,159.2 L99.4,159.2 L100.9,159.2 L102.4,159.2 L104.0,157.4 L105.5,155.2 L107.0,153.0 L108.5,151.6 L110.0,151.6 L111.6,151.6 L113.1,152.8 L114.6,154.4 L116.1,155.9 L117.6,157.4 L119.2,158.9 L120.7,159.2 L122.2,159.2 L123.7,159.2 L125.2,159.2 L126.8,159.2 L128.3,157.9 L129.8,155.6 L131.3,153.4 L132.8,151.6 L134.4,151.6 L135.9,151.6 L137.4,152.5 L138.9,154.0 L140.4,155.6 L142.0,157.1 L143.5,158.6 L145.0,159.2 L146.5,159.2 L148.0,159.2 L149.6,159.2 L151.1,158.8 L152.6,156.5 L154.1,154.3 L155.6,152.1 L157.2,151.6 L158.7,151.6 L160.2,151.9 L161.7,153.4 L163.2,155.0 L164.8,156.5 L166.3,158.0 L167.8,159.2 L169.3,159.2 L170.8,159.2 L172.4,159.2 L173.9,159.2 L175.4,159.2 L176.9,159.2 L178.4,157.9 L180.0,155.6 L181.5,153.4 L183.0,151.6 L184.5,151.6 L186.0,151.6 L187.6,152.5 L189.1,154.0 L190.6,155.6 L192.1,157.1 L193.6,158.6 L195.2,159.2 L196.7,159.2 L198.2,159.2 L199.7,159.2 L201.2,159.2 L201.2,159.2 L204.6,159.2 L217.7,138.9 L232.6,140.2 L242.0,152.2 L249.9,152.9 L256.0,159.0 L259.0,159.2 L260.5,159.2 L262.0,159.2 L263.6,157.9 L265.1,155.6 L266.6,153.4 L268.1,151.6 L269.6,151.6 L271.2,151.6 L272.7,152.5 L274.2,154.0 L275.7,155.6 L277.2,157.1 L278.8,158.6 L280.3,159.2 L281.8,159.2 L283.3,159.2 L284.8,159.2 L286.4,159.2 L287.9,159.2 L289.4,159.2 L290.9,157.0 L292.4,154.7 L294.0,152.5 L295.5,151.6 L297.0,151.6 L298.5,151.6 L300.0,153.1 L301.6,154.7 L303.1,156.2 L304.6,157.7 L306.1,159.2 L307.6,159.2 L309.2,159.2 L310.7,159.2 L312.2,159.2 L313.7,159.2 L315.2,159.2 L316.8,159.2 L318.3,159.2 L319.8,157.9 L321.3,155.6 L322.8,153.4 L324.4,151.6 L325.9,151.6 L327.4,151.6 L328.9,152.5 L330.4,154.0 L332.0,155.6 L333.5,157.1 L335.0,158.6 L336.5,159.2 L338.0,159.2 L339.6,159.2 L341.1,159.2 L342.6,159.2 L344.1,159.2 L345.6,159.2 L347.2,158.8 L348.7,156.5 L350.2,154.3 L351.7,152.1 L353.2,151.6 L354.8,151.6 L356.3,151.9 L357.8,153.4 L359.3,155.0 L360.8,156.5 L362.4,158.0 L363.9,159.2 L365.4,159.2 L366.9,159.2 L368.4,159.2 L370.0,159.2 L371.5,159.2 L373.0,159.2 L374.5,158.3 L376.0,156.1 L377.6,153.9 L379.1,151.6 L380.6,151.6 L382.1,151.6 L383.6,152.2 L385.2,153.7 L386.7,155.3 L388.2,156.8 L389.7,158.3 L391.2,159.2 L392.8,159.2 L394.3,159.2 L395.8,159.2 L397.3,159.2 L398.8,159.2 L400.4,159.2 L401.9,159.2 L403.4,157.0 L404.9,154.7 L406.4,152.5 L408.0,151.6 L409.5,151.6 L411.0,151.6 L412.5,153.1 L414.0,154.7 L415.6,156.2 L417.1,157.7 L418.6,159.2 L420.1,159.2 L421.6,159.2 L423.2,159.2 L424.7,159.2 L426.2,159.2 L427.7,159.2 L429.2,158.8 L430.8,156.5 L432.3,154.3 L433.8,152.1 L435.3,151.6 L436.8,151.6 L438.4,151.9 L439.9,153.4 L441.4,155.0 L442.9,156.5 L444.4,158.0 L446.0,159.2 L447.5,159.2 L449.0,159.2 L450.5,159.2 L452.0,159.2 L453.6,159.2 L455.1,159.2 L456.6,159.2 L458.1,159.2 L459.6,157.0 L461.2,154.7 L462.7,152.5 L464.2,151.6 L465.7,151.6 L467.2,151.6 L468.8,153.1 L470.3,154.7 L471.8,156.2 L473.3,157.7 L476.1,159.2 L476.1,159.4 L473.3,158.0 L471.8,156.7 L470.3,155.3 L468.8,154.0 L467.2,152.6 L465.7,152.6 L464.2,152.6 L462.7,153.4 L461.2,155.4 L459.6,157.4 L458.1,159.4 L456.6,159.4 L455.1,159.4 L453.6,159.4 L452.0,159.4 L450.5,159.4 L449.0,159.4 L447.5,159.4 L446.0,159.4 L444.4,158.3 L442.9,156.9 L441.4,155.6 L439.9,154.2 L438.4,152.9 L436.8,152.6 L435.3,152.6 L433.8,153.0 L432.3,155.0 L430.8,157.0 L429.2,159.0 L427.7,159.4 L426.2,159.4 L424.7,159.4 L423.2,159.4 L421.6,159.4 L420.1,159.4 L418.6,159.4 L417.1,158.0 L415.6,156.7 L414.0,155.3 L412.5,154.0 L411.0,152.6 L409.5,152.6 L408.0,152.6 L406.4,153.4 L404.9,155.4 L403.4,157.4 L401.9,159.4 L400.4,159.4 L398.8,159.4 L397.3,159.4 L395.8,159.4 L394.3,159.4 L392.8,159.4 L391.2,159.4 L389.7,158.5 L388.2,157.2 L386.7,155.9 L385.2,154.5 L383.6,153.2 L382.1,152.6 L380.6,152.6 L379.1,152.6 L377.6,154.6 L376.0,156.6 L374.5,158.6 L373.0,159.4 L371.5,159.4 L370.0,159.4 L368.4,159.4 L366.9,159.4 L365.4,159.4 L363.9,159.4 L362.4,158.3 L360.8,156.9 L359.3,155.6 L357.8,154.2 L356.3,152.9 L354.8,152.6 L353.2,152.6 L351.7,153.0 L350.2,155.0 L348.7,157.0 L347.2,159.0 L345.6,159.4 L344.1,159.4 L342.6,159.4 L341.1,159.4 L339.6,159.4 L338.0,159.4 L336.5,159.4 L335.0,158.8 L333.5,157.5 L332.0,156.1 L330.4,154.8 L328.9,153.4 L327.4,152.6 L325.9,152.6 L324.4,152.6 L322.8,154.2 L321.3,156.2 L319.8,158.2 L318.3,159.4 L316.8,159.4 L315.2,159.4 L313.7,159.4 L312.2,159.4 L310.7,159.4 L309.2,159.4 L307.6,159.4 L306.1,159.4 L304.6,158.0 L303.1,156.7 L301.6,155.3 L300.0,154.0 L298.5,152.6 L297.0,152.6 L295.5,152.6 L294.0,153.4 L292.4,155.4 L290.9,157.4 L289.4,159.4 L287.9,159.4 L286.4,159.4 L284.8,159.4 L283.3,159.4 L281.8,159.4 L280.3,159.4 L278.8,158.8 L277.2,157.5 L275.7,156.1 L274.2,154.8 L272.7,153.4 L271.2,152.6 L269.6,152.6 L268.1,152.6 L266.6,154.2 L265.1,156.2 L263.6,158.2 L262.0,159.4 L260.5,159.4 L259.0,159.4 L256.0,159.2 L249.9,153.8 L242.0,152.9 L232.6,144.0 L217.7,140.8 L204.6,159.4 L201.2,159.4 L201.2,159.4 L199.7,159.4 L198.2,159.4 L196.7,159.4 L195.2,159.4 L193.6,158.8 L192.1,157.5 L190.6,156.1 L189.1,154.8 L187.6,153.4 L186.0,152.6 L184.5,152.6 L183.0,152.6 L181.5,154.2 L180.0,156.2 L178.4,158.2 L176.9,159.4 L175.4,159.4 L173.9,159.4 L172.4,159.4 L170.8,159.4 L169.3,159.4 L167.8,159.4 L166.3,158.3 L164.8,156.9 L163.2,155.6 L161.7,154.2 L160.2,152.9 L158.7,152.6 L157.2,152.6 L155.6,153.0 L154.1,155.0 L152.6,157.0 L151.1,159.0 L149.6,159.4 L148.0,159.4 L146.5,159.4 L145.0,159.4 L143.5,158.8 L142.0,157.5 L140.4,156.1 L138.9,154.8 L137.4,153.4 L135.9,152.6 L134.4,152.6 L132.8,152.6 L131.3,154.2 L129.8,156.2 L128.3,158.2 L126.8,159.4 L125.2,159.4 L123.7,159.4 L122.2,159.4 L120.7,159.4 L119.2,159.1 L117.6,157.7 L116.1,156.4 L114.6,155.0 L113.1,153.7 L111.6,152.6 L110.0,152.6 L108.5,152.6 L107.0,153.8 L105.5,155.8 L104.0,157.8 L102.4,159.4 L100.9,159.4 L99.4,159.4 L97.9,159.4 L96.4,159.4 L94.8,158.3 L93.3,156.9 L91.8,155.6 L90.3,154.2 L88.8,152.9 L87.2,152.6 L85.7,152.6 L84.2,153.0 L82.7,155.0 L81.2,157.0 L79.6,159.0 L78.1,159.4 L76.6,159.4 L75.1,159.4 L73.6,159.4 L72.0,159.4 L70.5,158.5 L69.0,157.2 L67.5,155.9 L66.0,154.5 L64.4,153.2 L62.9,152.6 L61.4,152.6 L59.9,152.6 L58.4,154.6 L56.8,156.6 L55.3,158.6 L53.8,159.4 L52.3,159.4 L50.8,159.4 L49.2,159.4 L47.7,159.4 L46.2,158.5 L44.7,157.2 L43.2,155.9 L41.6,154.5 L40.1,153.2 L38.6,152.6 L37.1,152.6 L35.6,152.6 L34.0,154.6 L32.5,156.6 L31.0,158.6 Z" fill="#6ED0E0" fill-opacity="0.1" stroke="none"/><path d="M31.0,34.0 L32.5,34.1 L34.0,34.3 L35.6,34.5 L37.1,34.8 L38.6,34.8 L40.1,34.6 L41.6,34.4 L43.2,34.1 L44.7,34.0 L46.2,34.0 L47.7,34.0 L49.2,34.0 L50.8,34.0 L52.3,34.0 L53.8,34.0 L55.3,34.0 L56.8,34.1 L58.4,34.3 L59.9,34.5 L61.4,34.8 L62.9,34.8 L64.4,34.6 L66.0,34.4 L67.5,34.1 L69.0,34.0 L70.5,34.0 L72.0,34.0 L73.6,34.0 L75.1,34.0 L76.6,34.0 L78.1,34.0 L79.6,34.0 L81.2,34.1 L82.7,34.3 L84.2,34.5 L85.7,34.7 L87.2,34.9 L88.8,34.6 L90.3,34.4 L91.8,34.2 L93.3,34.0 L94.8,34.0 L96.4,34.0 L97.9,34.0 L99.4,34.0 L100.9,34.0 L102.4,34.0 L104.0,34.0 L105.5,34.2 L107.0,34.4 L108.5,34.6 L110.0,34.9 L111.6,34.7 L113.1,34.5 L114.6,34.3 L116.1,34.1 L117.6,34.0 L119.2,34.0 L120.7,34.0 L122.2,34.0 L123.7,34.0 L125.2,34.0 L126.8,34.0 L128.3,34.0 L129.8,34.1 L131.3,34.4 L132.8,34.6 L134.4,34.8 L135.9,34.8 L137.4,34.5 L138.9,34.3 L140.4,34.1 L142.0,34.0 L143.5,34.0 L145.0,34.0 L146.5,34.0 L148.0,34.0 L149.6,34.0 L151.1,34.0 L152.6,34.1 L154.1,34.3 L155.6,34.5 L157.2,34.7 L158.7,34.9 L160.2,34.6 L161.7,34.4 L163.2,34.2 L164.8,34.0 L166.3,34.0 L167.8,34.0 L169.3,34.0 L170.8,34.0 L172.4,34.0 L173.9,34.0 L175.4,34.0 L176.9,34.0 L178.4,34.0 L180.0,34.1 L181.5,34.4 L183.0,34.6 L184.5,34.8 L186.0,34.8 L187.6,34.5 L189.1,34.3 L190.6,34.1 L192.1,34.0 L193.6,34.0 L195.2,34.0 L196.7,34.0 L198.2,34.0 L199.7,34.0 L201.2,34.0 L202.8,34.0 L204.3,34.0 L205.8,34.0 L207.3,34.0 L208.8,34.0 L210.4,34.6 L211.9,35.2 L213.4,35.7 L214.9,36.3 L216.4,36.9 L218.0,37.4 L219.5,38.0 L221.0,38.6 L222.5,38.4 L224.0,38.3 L225.6,38.1 L227.1,37.9 L228.6,37.3 L230.1,36.6 L231.6,36.0 L233.2,35.3 L234.7,34.7 L236.2,34.0 L237.7,34.0 L239.2,34.0 L240.8,34.0 L242.3,34.0 L243.8,34.0 L245.3,34.0 L246.8,34.0 L248.4,34.0 L249.9,34.0 L251.4,34.0 L252.9,34.0 L254.4,34.0 L256.0,34.0 L257.5,34.0 L259.0,34.0 L260.5,34.0 L262.0,34.0 L263.6,34.0 L265.1,34.1 L266.6,34.4 L268.1,34.6 L269.6,34.8 L271.2,34.8 L272.7,34.5 L274.2,34.3 L275.7,34.1 L277.2,34.0 L278.8,34.0 L280.3,34.0 L281.8,34.0 L283.3,34.0 L284.8,34.0 L286.4,34.0 L287.9,34.0 L289.4,34.0 L290.9,34.0 L292.4,34.2 L294.0,34.5 L295.5,34.7 L297.0,34.9 L298.5,34.7 L300.0,34.5 L301.6,34.2 L303.1,34.0 L304.6,34.0 L306.1,34.0 L307.6,34.0 L309.2,34.0 L310.7,34.0 L312.2,34.0 L313.7,34.0 L315.2,34.0 L316.8,34.0 L318.3,34.0 L319.8,34.0 L321.3,34.1 L322.8,34.4 L324.4,34.6 L325.9,34.8 L327.4,34.8 L328.9,34.5 L330.4,34.3 L332.0,34.1 L333.5,34.0 L335.0,34.0 L336.5,34.0 L338.0,34.0 L339.6,34.0 L341.1,34.0 L342.6,34.0 L344.1,34.0 L345.6,34.0 L347.2,34.0 L348.7,34.1 L350.2,34.3 L351.7,34.5 L353.2,34.7 L354.8,34.9 L356.3,34.6 L357.8,34.4 L359.3,34.2 L360.8,34.0 L362.4,34.0 L363.9,34.0 L365.4,34.0 L366.9,34.0 L368.4,34.0 L370.0,34.0 L371.5,34.0 L373.0,34.0 L374.5,34.0 L376.0,34.1 L377.6,34.3 L379.1,34.5 L380.6,34.8 L382.1,34.8 L383.6,34.6 L385.2,34.4 L386.7,34.1 L388.2,34.0 L389.7,34.0 L391.2,34.0 L392.8,34.0 L394.3,34.0 L395.8,34.0 L397.3,34.0 L398.8,34.0 L400.4,34.0 L401.9,34.0 L403.4,34.0 L404.9,34.2 L406.4,34.5 L408.0,34.7 L409.5,34.9 L411.0,34.7 L412.5,34.5 L414.0,34.2 L415.6,34.0 L417.1,34.0 L418.6,34.0 L420.1,34.0 L421.6,34.0 L423.2,34.0 L424.7,34.0 L426.2,34.0 L427.7,34.0 L429.2,34.0 L430.8,34.1 L432.3,34.3 L433.8,34.5 L435.3,34.7 L436.8,34.9 L438.4,34.6 L439.9,34.4 L441.4,34.2 L442.9,34.0 L444.4,34.0 L446.0,34.0 L447.5,34.0 L449.0,34.0 L450.5,34.0 L452.0,34.0 L453.6,34.0 L455.1,34.0 L456.6,34.0 L458.1,34.0 L459.6,34.0 L461.2,34.2 L462.7,34.5 L464.2,34.7 L465.7,34.9 L467.2,34.7 L468.8,34.5 L470.3,34.2 L471.8,34.0 L473.3,34.0 L476.1,34.0 L476.1,159.2 L473.3,157.7 L471.8,156.2 L470.3,154.7 L468.8,153.1 L467.2,151.6 L465.7,151.6 L464.2,151.6 L462.7,152.5 L461.2,154.7 L459.6,157.0 L458.1,159.2 L456.6,159.2 L455.1,159.2 L453.6,159.2 L452.0,159.2 L450.5,159.2 L449.0,159.2 L447.5,159.2 L446.0,159.2 L444.4,158.0 L442.9,156.5 L441.4,155.0 L439.9,153.4 L438.4,151.9 L436.8,151.6 L435.3,151.6 L433.8,152.1 L432.3,154.3 L430.8,156.5 L429.2,158.8 L427.7,159.2 L426.2,159.2 L424.7,159.2 L423.2,159.2 L421.6,159.2 L420.1,159.2 L418.6,159.2 L417.1,157.7 L415.6,156.2 L414.0,154.7 L412.5,153.1 L411.0,151.6 L409.5,151.6 L408.0,151.6 L406.4,152.5 L404.9,154.7 L403.4,157.0 L401.9,159.2 L400.4,159.2 L398.8,159.2 L397.3,159.2 L395.8,159.2 L394.3,159.2 L392.8,159.2 L391.2,159.2 L389.7,158.3 L388.2,156.8 L386.7,155.3 L385.2,153.7 L383.6,152.2 L382.1,151.6 L380.6,151.6 L379.1,151.6 L377.6,153.9 L376.0,156.1 L374.5,158.3 L373.0,159.2 L371.5,159.2 L370.0,159.2 L368.4,159.2 L366.9,159.2 L365.4,159.2 L363.9,159.2 L362.4,158.0 L360.8,156.5 L359.3,155.0 L357.8,153.4 L356.3,151.9 L354.8,151.6 L353.2,151.6 L351.7,152.1 L350.2,154.3 L348.7,156.5 L347.2,158.8 L345.6,159.2 L344.1,159.2 L342.6,159.2 L341.1,159.2 L339.6,159.2 L338.0,159.2 L336.5,159.2 L335.0,158.6 L333.5,157.1 L332.0,155.6 L330.4,154.0 L328.9,152.5 L327.4,151.6 L325.9,151.6 L324.4,151.6 L322.8,153.4 L321.3,155.6 L319.8,157.9 L318.3,159.2 L316.8,159.2 L315.2,159.2 L313.7,159.2 L312.2,159.2 L310.7,159.2 L309.2,159.2 L307.6,159.2 L306.1,159.2 L304.6,157.7 L303.1,156.2 L301.6,154.7 L300.0,153.1 L298.5,151.6 L297.0,151.6 L295.5,151.6 L294.0,152.5 L292.4,154.7 L290.9,157.0 L289.4,159.2 L287.9,159.2 L286.4,159.2 L284.8,159.2 L283.3,159.2 L281.8,159.2 L280.3,159.2 L278.8,158.6 L277.2,157.1 L275.7,155.6 L274.2,154.0 L272.7,152.5 L271.2,151.6 L269.6,151.6 L268.1,151.6 L266.6,153.4 L265.1,155.6 L263.6,157.9 L262.0,159.2 L260.5,159.2 L259.0,159.2 L256.0,159.0 L249.9,152.9 L242.0,152.2 L232.6,140.2 L217.7,138.9 L204.6,159.2 L201.2,159.2 L201.2,159.2 L199.7,159.2 L198.2,159.2 L196.7,159.2 L195.2,159.2 L193.6,158.6 L192.1,157.1 L190.6,155.6 L189.1,154.0 L187.6,152.5 L186.0,151.6 L184.5,151.6 L183.0,151.6 L181.5,153.4 L180.0,155.6 L178.4,157.9 L176.9,159.2 L175.4,159.2 L173.9,159.2 L172.4,159.2 L170.8,159.2 L169.3,159.2 L167.8,159.2 L166.3,158.0 L164.8,156.5 L163.2,155.0 L161.7,153.4 L160.2,151.9 L158.7,151.6 L157.2,151.6 L155.6,152.1 L154.1,154.3 L152.6,156.5 L151.1,158.8 L149.6,159.2 L148.0,159.2 L146.5,159.2 L145.0,159.2 L143.5,158.6 L142.0,157.1 L140.4,155.6 L138.9,154.0 L137.4,152.5 L135.9,151.6 L134.4,151.6 L132.8,151.6 L131.3,153.4 L129.8,155.6 L128.3,157.9 L126.8,159.2 L125.2,159.2 L123.7,159.2 L122.2,159.2 L120.7,159.2 L119.2,158.9 L117.6,157.4 L116.1,155.9 L114.6,154.4 L113.1,152.8 L111.6,151.6 L110.0,151.6 L108.5,151.6 L107.0,153.0 L105.5,155.2 L104.0,157.4 L102.4,159.2 L100.9,159.2 L99.4,159.2 L97.9,159.2 L96.4,159.2 L94.8,158.0 L93.3,156.5 L91.8,155.0 L90.3,153.4 L88.8,151.9 L87.2,151.6 L85.7,151.6 L84.2,152.1 L82.7,154.3 L81.2,156.5 L79.6,158.8 L78.1,159.2 L76.6,159.2 L75.1,159.2 L73.6,159.2 L72.0,159.2 L70.5,158.3 L69.0,156.8 L67.5,155.3 L66.0,153.7 L64.4,152.2 L62.9,151.6 L61.4,151.6 L59.9,151.6 L58.4,153.9 L56.8,156.1 L55.3,158.3 L53.8,159.2 L52.3,159.2 L50.8,159.2 L49.2,159.2 L47.7,159.2 L46.2,158.3 L44.7,156.8 L43.2,155.3 L41.6,153.7 L40.1,152.2 L38.6,151.6 L37.1,151.6 L35.6,151.6 L34.0,153.9 L32.5,156.1 L31.0,158.3 Z" fill="#EF843C" fill-opacity="0.1" stroke="none"/><path d="M31.0,159.2 L32.5,157.9 L34.0,156.5 L35.6,155.2 L37.1,155.2 L38.6,155.2 L40.1,155.5 L41.6,156.4 L43.2,157.4 L44.7,158.3 L46.2,159.2 L47.7,159.7 L49.2,159.7 L50.8,159.7 L52.3,159.7 L53.8,159.7 L55.3,159.2 L56.8,157.9 L58.4,156.5 L59.9,155.2 L61.4,155.2 L62.9,155.2 L64.4,155.5 L66.0,156.4 L67.5,157.4 L69.0,158.3 L70.5,159.2 L72.0,159.7 L73.6,159.7 L75.1,159.7 L76.6,159.7 L78.1,159.7 L79.6,159.5 L81.2,158.1 L82.7,156.8 L84.2,155.4 L85.7,155.2 L87.2,155.2 L88.8,155.3 L90.3,156.3 L91.8,157.2 L93.3,158.1 L94.8,159.0 L96.4,159.7 L97.9,159.7 L99.4,159.7 L100.9,159.7 L102.4,159.7 L104.0,158.7 L105.5,157.3 L107.0,156.0 L108.5,155.2 L110.0,155.2 L111.6,155.2 L113.1,155.9 L114.6,156.8 L116.1,157.7 L117.6,158.6 L119.2,159.6 L120.7,159.7 L122.2,159.7 L123.7,159.7 L125.2,159.7 L126.8,159.7 L128.3,158.9 L129.8,157.6 L131.3,156.2 L132.8,155.2 L134.4,155.2 L135.9,155.2 L137.4,155.7 L138.9,156.6 L140.4,157.5 L142.0,158.5 L143.5,159.4 L145.0,159.7 L146.5,159.7 L148.0,159.7 L149.6,159.7 L151.1,159.5 L152.6,158.1 L154.1,156.8 L155.6,155.4 L157.2,155.2 L158.7,155.2 L160.2,155.3 L161.7,156.3 L163.2,157.2 L164.8,158.1 L166.3,159.0 L167.8,159.7 L169.3,159.7 L170.8,159.7 L172.4,159.7 L173.9,159.7 L175.4,159.7 L176.9,159.7 L178.4,158.9 L180.0,157.6 L181.5,156.2 L183.0,155.2 L184.5,155.2 L186.0,155.2 L187.6,155.7 L189.1,156.6 L190.6,157.5 L192.1,158.5 L193.6,159.4 L195.2,159.7 L196.7,159.7 L198.2,159.7 L199.7,159.7 L201.2,159.7 L201.2,159.7 L204.6,159.7 L217.7,145.9 L232.6,148.4 L242.0,154.8 L249.9,155.4 L256.0,159.6 L259.0,159.7 L260.5,159.7 L262.0,159.7 L263.6,158.9 L265.1,157.6 L266.6,156.2 L268.1,155.2 L269.6,155.2 L271.2,155.2 L272.7,155.7 L274.2,156.6 L275.7,157.5 L277.2,158.5 L278.8,159.4 L280.3,159.7 L281.8,159.7 L283.3,159.7 L284.8,159.7 L286.4,159.7 L287.9,159.7 L289.4,159.7 L290.9,158.4 L292.4,157.0 L294.0,155.7 L295.5,155.2 L297.0,155.2 L298.5,155.2 L300.0,156.1 L301.6,157.0 L303.1,157.9 L304.6,158.8 L306.1,159.7 L307.6,159.7 L309.2,159.7 L310.7,159.7 L312.2,159.7 L313.7,159.7 L315.2,159.7 L316.8,159.7 L318.3,159.7 L319.8,158.9 L321.3,157.6 L322.8,156.2 L324.4,155.2 L325.9,155.2 L327.4,155.2 L328.9,155.7 L330.4,156.6 L332.0,157.5 L333.5,158.5 L335.0,159.4 L336.5,159.7 L338.0,159.7 L339.6,159.7 L341.1,159.7 L342.6,159.7 L344.1,159.7 L345.6,159.7 L347.2,159.5 L348.7,158.1 L350.2,156.8 L351.7,155.4 L353.2,155.2 L354.8,155.2 L356.3,155.3 L357.8,156.3 L359.3,157.2 L360.8,158.1 L362.4,159.0 L363.9,159.7 L365.4,159.7 L366.9,159.7 L368.4,159.7 L370.0,159.7 L371.5,159.7 L373.0,159.7 L374.5,159.2 L376.0,157.9 L377.6,156.5 L379.1,155.2 L380.6,155.2 L382.1,155.2 L383.6,155.5 L385.2,156.4 L386.7,157.4 L388.2,158.3 L389.7,159.2 L391.2,159.7 L392.8,159.7 L394.3,159.7 L395.8,159.7 L397.3,159.7 L398.8,159.7 L400.4,159.7 L401.9,159.7 L403.4,158.4 L404.9,157.0 L406.4,155.7 L408.0,155.2 L409.5,155.2 L411.0,155.2 L412.5,156.1 L414.0,157.0 L415.6,157.9 L417.1,158.8 L418.6,159.7 L420.1,159.7 L421.6,159.7 L423.2,159.7 L424.7,159.7 L426.2,159.7 L427.7,159.7 L429.2,159.5 L430.8,158.1 L432.3,156.8 L433.8,155.4 L435.3,155.2 L436.8,155.2 L438.4,155.3 L439.9,156.3 L441.4,157.2 L442.9,158.1 L444.4,159.0 L446.0,159.7 L447.5,159.7 L449.0,159.7 L450.5,159.7 L452.0,159.7 L453.6,159.7 L455.1,159.7 L456.6,159.7 L458.1,159.7 L459.6,158.4 L461.2,157.0 L462.7,155.7 L464.2,155.2 L465.7,155.2 L467.2,155.2 L468.8,156.1 L470.3,157.0 L471.8,157.9 L473.3,158.8 L476.1,159.7" fill="none" stroke="#7EB26D" stroke-width="1" stroke-linejoin="round"/><path d="M31.0,158.6 L32.5,156.6 L34.0,154.6 L35.6,152.6 L37.1,152.6 L38.6,152.6 L40.1,153.2 L41.6,154.5 L43.2,155.9 L44.7,157.2 L46.2,158.5 L47.7,159.4 L49.2,159.4 L50.8,159.4 L52.3,159.4 L53.8,159.4 L55.3,158.6 L56.8,156.6 L58.4,154.6 L59.9,152.6 L61.4,152.6 L62.9,152.6 L64.4,153.2 L66.0,154.5 L67.5,155.9 L69.0,157.2 L70.5,158.5 L72.0,159.4 L73.6,159.4 L75.1,159.4 L76.6,159.4 L78.1,159.4 L79.6,159.0 L81.2,157.0 L82.7,155.0 L84.2,153.0 L85.7,152.6 L87.2,152.6 L88.8,152.9 L90.3,154.2 L91.8,155.6 L93.3,156.9 L94.8,158.3 L96.4,159.4 L97.9,159.4 L99.4,159.4 L100.9,159.4 L102.4,159.4 L104.0,157.8 L105.5,155.8 L107.0,153.8 L108.5,152.6 L110.0,152.6 L111.6,152.6 L113.1,153.7 L114.6,155.0 L116.1,156.4 L117.6,157.7 L119.2,159.1 L120.7,159.4 L122.2,159.4 L123.7,159.4 L125.2,159.4 L126.8,159.4 L128.3,158.2 L129.8,156.2 L131.3,154.2 L132.8,152.6 L134.4,152.6 L135.9,152.6 L137.4,153.4 L138.9,154.8 L140.4,156.1 L142.0,157.5 L143.5,158.8 L145.0,159.4 L146.5,159.4 L148.0,159.4 L149.6,159.4 L151.1,159.0 L152.6,157.0 L154.1,155.0 L155.6,153.0 L157.2,152.6 L158.7,152.6 L160.2,152.9 L161.7,154.2 L163.2,155.6 L164.8,156.9 L166.3,158.3 L167.8,159.4 L169.3,159.4 L170.8,159.4 L172.4,159.4 L173.9,159.4 L175.4,159.4 L176.9,159.4 L178.4,158.2 L180.0,156.2 L181.5,154.2 L183.0,152.6 L184.5,152.6 L186.0,152.6 L187.6,153.4 L189.1,154.8 L190.6,156.1 L192.1,157.5 L193.6,158.8 L195.2,159.4 L196.7,159.4 L198.2,159.4 L199.7,159.4 L201.2,159.4 L201.2,159.4 L204.6,159.4 L217.7,140.8 L232.6,144.0 L242.0,152.9 L249.9,153.8 L256.0,159.2 L259.0,159.4 L260.5,159.4 L262.0,159.4 L263.6,158.2 L265.1,156.2 L266.6,154.2 L268.1,152.6 L269.6,152.6 L271.2,152.6 L272.7,153.4 L274.2,154.8 L275.7,156.1 L277.2,157.5 L278.8,158.8 L280.3,159.4 L281.8,159.4 L283.3,159.4 L284.8,159.4 L286.4,159.4 L287.9,159.4 L289.4,159.4 L290.9,157.4 L292.4,155.4 L294.0,153.4 L295.5,152.6 L297.0,152.6 L298.5,152.6 L300.0,154.0 L301.6,155.3 L303.1,156.7 L304.6,158.0 L306.1,159.4 L307.6,159.4 L309.2,159.4 L310.7,159.4 L312.2,159.4 L313.7,159.4 L315.2,159.4 L316.8,159.4 L318.3,159.4 L319.8,158.2 L321.3,156.2 L322.8,154.2 L324.4,152.6 L325.9,152.6 L327.4,152.6 L328.9,153.4 L330.4,154.8 L332.0,156.1 L333.5,157.5 L335.0,158.8 L336.5,159.4 L338.0,159.4 L339.6,159.4 L341.1,159.4 L342.6,159.4 L344.1,159.4 L345.6,159.4 L347.2,159.0 L348.7,157.0 L350.2,155.0 L351.7,153.0 L353.2,152.6 L354.8,152.6 L356.3,152.9 L357.8,154.2 L359.3,155.6 L360.8,156.9 L362.4,158.3 L363.9,159.4 L365.4,159.4 L366.9,159.4 L368.4,159.4 L370.0,159.4 L371.5,159.4 L373.0,159.4 L374.5,158.6 L376.0,156.6 L377.6,154.6 L379.1,152.6 L380.6,152.6 L382.1,152.6 L383.6,153.2 L385.2,154.5 L386.7,155.9 L388.2,157.2 L389.7,158.5 L391.2,159.4 L392.8,159.4 L394.3,159.4 L395.8,159.4 L397.3,159.4 L398.8,159.4 L400.4,159.4 L401.9,159.4 L403.4,157.4 L404.9,155.4 L406.4,153.4 L408.0,152.6 L409.5,152.6 L411.0,152.6 L412.5,154.0 L414.0,155.3 L415.6,156.7 L417.1,158.0 L418.6,159.4 L420.1,159.4 L421.6,159.4 L423.2,159.4 L424.7,159.4 L426.2,159.4 L427.7,159.4 L429.2,159.0 L430.8,157.0 L432.3,155.0 L433.8,153.0 L435.3,152.6 L436.8,152.6 L438.4,152.9 L439.9,154.2 L441.4,155.6 L442.9,156.9 L444.4,158.3 L446.0,159.4 L447.5,159.4 L449.0,159.4 L450.5,159.4 L452.0,159.4 L453.6,159.4 L455.1,159.4 L456.6,159.4 L458.1,159.4 L459.6,157.4 L461.2,155.4 L462.7,153.4 L464.2,152.6 L465.7,152.6 L467.2,152.6 L468.8,154.0 L470.3,155.3 L471.8,156.7 L473.3,158.0 L476.1,159.4" fill="none" stroke="#EAB839" stroke-width="1" stroke-linejoin="round"/><path d="M31.0,158.3 L32.5,156.1 L34.0,153.9 L35.6,151.6 L37.1,151.6 L38.6,151.6 L40.1,152.2 L41.6,153.7 L43.2,155.3 L44.7,156.8 L46.2,158.3 L47.7,159.2 L49.2,159.2 L50.8,159.2 L52.3,159.2 L53.8,159.2 L55.3,158.3 L56.8,156.1 L58.4,153.9 L59.9,151.6 L61.4,151.6 L62.9,151.6 L64.4,152.2 L66.0,153.7 L67.5,155.3 L69.0,156.8 L70.5,158.3 L72.0,159.2 L73.6,159.2 L75.1,159.2 L76.6,159.2 L78.1,159.2 L79.6,158.8 L81.2,156.5 L82.7,154.3 L84.2,152.1 L85.7,151.6 L87.2,151.6 L88.8,151.9 L90.3,153.4 L91.8,155.0 L93.3,156.5 L94.8,158.0 L96.4,159.2 L97.9,159.2 L99.4,159.2 L100.9,159.2 L102.4,159.2 L104.0,157.4 L105.5,155.2 L107.0,153.0 L108.5,151.6 L110.0,151.6 L111.6,151.6 L113.1,152.8 L114.6,154.4 L116.1,155.9 L117.6,157.4 L119.2,158.9 L120.7,159.2 L122.2,159.2 L123.7,159.2 L125.2,159.2 L126.8,159.2 L128.3,157.9 L129.8,155.6 L131.3,153.4 L132.8,151.6 L134.4,151.6 L135.9,151.6 L137.4,152.5 L138.9,154.0 L140.4,155.6 L142.0,157.1 L143.5,158.6 L145.0,159.2 L146.5,159.2 L148.0,159.2 L149.6,159.2 L151.1,158.8 L152.6,156.5 L154.1,154.3 L155.6,152.1 L157.2,151.6 L158.7,151.6 L160.2,151.9 L161.7,153.4 L163.2,155.0 L164.8,156.5 L166.3,158.0 L167.8,159.2 L169.3,159.2 L170.8,159.2 L172.4,159.2 L173.9,159.2 L175.4,159.2 L176.9,159.2 L178.4,157.9 L180.0,155.6 L181.5,153.4 L183.0,151.6 L184.5,151.6 L186.0,151.6 L187.6,152.5 L189.1,154.0 L190.6,155.6 L192.1,157.1 L193.6,158.6 L195.2,159.2 L196.7,159.2 L198.2,159.2 L199.7,159.2 L201.2,159.2 L201.2,159.2 L204.6,159.2 L217.7,138.9 L232.6,140.2 L242.0,152.2 L249.9,152.9 L256.0,159.0 L259.0,159.2 L260.5,159.2 L262.0,159.2 L263.6,157.9 L265.1,155.6 L266.6,153.4 L268.1,151.6 L269.6,151.6 L271.2,151.6 L272.7,152.5 L274.2,154.0 L275.7,155.6 L277.2,157.1 L278.8,158.6 L280.3,159.2 L281.8,159.2 L283.3,159.2 L284.8,159.2 L286.4,159.2 L287.9,159.2 L289.4,159.2 L290.9,157.0 L292.4,154.7 L294.0,152.5 L295.5,151.6 L297.0,151.6 L298.5,151.6 L300.0,153.1 L301.6,154.7 L303.1,156.2 L304.6,157.7 L306.1,159.2 L307.6,159.2 L309.2,159.2 L310.7,159.2 L312.2,159.2 L313.7,159.2 L315.2,159.2 L316.8,159.2 L318.3,159.2 L319.8,157.9 L321.3,155.6 L322.8,153.4 L324.4,151.6 L325.9,151.6 L327.4,151.6 L328.9,152.5 L330.4,154.0 L332.0,155.6 L333.5,157.1 L335.0,158.6 L336.5,159.2 L338.0,159.2 L339.6,159.2 L341.1,159.2 L342.6,159.2 L344.1,159.2 L345.6,159.2 L347.2,158.8 L348.7,156.5 L350.2,154.3 L351.7,152.1 L353.2,151.6 L354.8,151.6 L356.3,151.9 L357.8,153.4 L359.3,155.0 L360.8,156.5 L362.4,158.0 L363.9,159.2 L365.4,159.2 L366.9,159.2 L368.4,159.2 L370.0,159.2 L371.5,159.2 L373.0,159.2 L374.5,158.3 L376.0,156.1 L377.6,153.9 L379.1,151.6 L380.6,151.6 L382.1,151.6 L383.6,152.2 L385.2,153.7 L386.7,155.3 L388.2,156.8 L389.7,158.3 L391.2,159.2 L392.8,159.2 L394.3,159.2 L395.8,159.2 L397.3,159.2 L398.8,159.2 L400.4,159.2 L401.9,159.2 L403.4,157.0 L404.9,154.7 L406.4,152.5 L408.0,151.6 L409.5,151.6 L411.0,151.6 L412.5,153.1 L414.0,154.7 L415.6,156.2 L417.1,157.7 L418.6,159.2 L420.1,159.2 L421.6,159.2 L423.2,159.2 L424.7,159.2 L426.2,159.2 L427.7,159.2 L429.2,158.8 L430.8,156.5 L432.3,154.3 L433.8,152.1 L435.3,151.6 L436.8,151.6 L438.4,151.9 L439.9,153.4 L441.4,155.0 L442.9,156.5 L444.4,158.0 L446.0,159.2 L447.5,159.2 L449.0,159.2 L450.5,159.2 L452.0,159.2 L453.6,159.2 L455.1,159.2 L456.6,159.2 L458.1,159.2 L459.6,157.0 L461.2,154.7 L462.7,152.5 L464.2,151.6 L465.7,151.6 L467.2,151.6 L468.8,153.1 L470.3,154.7 L471.8,156.2 L473.3,157.7 L476.1,159.2" fill="none" stroke="#6ED0E0" stroke-width="1" stroke-linejoin="round"/><path d="M31.0,34.0 L32.5,34.1 L34.0,34.3 L35.6,34.5 L37.1,34.8 L38.6,34.8 L40.1,34.6 L41.6,34.4 L43.2,34.1 L44.7,34.0 L46.2,34.0 L47.7,34.0 L49.2,34.0 L50.8,34.0 L52.3,34.0 L53.8,34.0 L55.3,34.0 L56.8,34.1 L58.4,34.3 L59.9,34.5 L61.4,34.8 L62.9,34.8 L64.4,34.6 L66.0,34.4 L67.5,34.1 L69.0,34.0 L70.5,34.0 L72.0,34.0 L73.6,34.0 L75.1,34.0 L76.6,34.0 L78.1,34.0 L79.6,34.0 L81.2,34.1 L82.7,34.3 L84.2,34.5 L85.7,34.7 L87.2,34.9 L88.8,34.6 L90.3,34.4 L91.8,34.2 L93.3,34.0 L94.8,34.0 L96.4,34.0 L97.9,34.0 L99.4,34.0 L100.9,34.0 L102.4,34.0 L104.0,34.0 L105.5,34.2 L107.0,34.4 L108.5,34.6 L110.0,34.9 L111.6,34.7 L113.1,34.5 L114.6,34.3 L116.1,34.1 L117.6,34.0 L119.2,34.0 L120.7,34.0 L122.2,34.0 L123.7,34.0 L125.2,34.0 L126.8,34.0 L128.3,34.0 L129.8,34.1 L131.3,34.4 L132.8,34.6 L134.4,34.8 L135.9,34.8 L137.4,34.5 L138.9,34.3 L140.4,34.1 L142.0,34.0 L143.5,34.0 L145.0,34.0 L146.5,34.0 L148.0,34.0 L149.6,34.0 L151.1,34.0 L152.6,34.1 L154.1,34.3 L155.6,34.5 L157.2,34.7 L158.7,34.9 L160.2,34.6 L161.7,34.4 L163.2,34.2 L164.8,34.0 L166.3,34.0 L167.8,34.0 L169.3,34.0 L170.8,34.0 L172.4,34.0 L173.9,34.0 L175.4,34.0 L176.9,34.0 L178.4,34.0 L180.0,34.1 L181.5,34.4 L183.0,34.6 L184.5,34.8 L186.0,34.8 L187.6,34.5 L189.1,34.3 L190.6,34.1 L192.1,34.0 L193.6,34.0 L195.2,34.0 L196.7,34.0 L198.2,34.0 L199.7,34.0 L201.2,34.0 L202.8,34.0 L204.3,34.0 L205.8,34.0 L207.3,34.0 L208.8,34.0 L210.4,34.6 L211.9,35.2 L213.4,35.7 L214.9,36.3 L216.4,36.9 L218.0,37.4 L219.5,38.0 L221.0,38.6 L222.5,38.4 L224.0,38.3 L225.6,38.1 L227.1,37.9 L228.6,37.3 L230.1,36.6 L231.6,36.0 L233.2,35.3 L234.7,34.7 L236.2,34.0 L237.7,34.0 L239.2,34.0 L240.8,34.0 L242.3,34.0 L243.8,34.0 L245.3,34.0 L246.8,34.0 L248.4,34.0 L249.9,34.0 L251.4,34.0 L252.9,34.0 L254.4,34.0 L256.0,34.0 L257.5,34.0 L259.0,34.0 L260.5,34.0 L262.0,34.0 L263.6,34.0 L265.1,34.1 L266.6,34.4 L268.1,34.6 L269.6,34.8 L271.2,34.8 L272.7,34.5 L274.2,34.3 L275.7,34.1 L277.2,34.0 L278.8,34.0 L280.3,34.0 L281.8,34.0 L283.3,34.0 L284.8,34.0 L286.4,34.0 L287.9,34.0 L289.4,34.0 L290.9,34.0 L292.4,34.2 L294.0,34.5 L295.5,34.7 L297.0,34.9 L298.5,34.7 L300.0,34.5 L301.6,34.2 L303.1,34.0 L304.6,34.0 L306.1,34.0 L307.6,34.0 L309.2,34.0 L310.7,34.0 L312.2,34.0 L313.7,34.0 L315.2,34.0 L316.8,34.0 L318.3,34.0 L319.8,34.0 L321.3,34.1 L322.8,34.4 L324.4,34.6 L325.9,34.8 L327.4,34.8 L328.9,34.5 L330.4,34.3 L332.0,34.1 L333.5,34.0 L335.0,34.0 L336.5,34.0 L338.0,34.0 L339.6,34.0 L341.1,34.0 L342.6,34.0 L344.1,34.0 L345.6,34.0 L347.2,34.0 L348.7,34.1 L350.2,34.3 L351.7,34.5 L353.2,34.7 L354.8,34.9 L356.3,34.6 L357.8,34.4 L359.3,34.2 L360.8,34.0 L362.4,34.0 L363.9,34.0 L365.4,34.0 L366.9,34.0 L368.4,34.0 L370.0,34.0 L371.5,34.0 L373.0,34.0 L374.5,34.0 L376.0,34.1 L377.6,34.3 L379.1,34.5 L380.6,34.8 L382.1,34.8 L383.6,34.6 L385.2,34.4 L386.7,34.1 L388.2,34.0 L389.7,34.0 L391.2,34.0 L392.8,34.0 L394.3,34.0 L395.8,34.0 L397.3,34.0 L398.8,34.0 L400.4,34.0 L401.9,34.0 L403.4,34.0 L404.9,34.2 L406.4,34.5 L408.0,34.7 L409.5,34.9 L411.0,34.7 L412.5,34.5 L414.0,34.2 L415.6,34.0 L417.1,34.0 L418.6,34.0 L420.1,34.0 L421.6,34.0 L423.2,34.0 L424.7,34.0 L426.2,34.0 L427.7,34.0 L429.2,34.0 L430.8,34.1 L432.3,34.3 L433.8,34.5 L435.3,34.7 L436.8,34.9 L438.4,34.6 L439.9,34.4 L441.4,34.2 L442.9,34.0 L444.4,34.0 L446.0,34.0 L447.5,34.0 L449.0,34.0 L450.5,34.0 L452.0,34.0 L453.6,34.0 L455.1,34.0 L456.6,34.0 L458.1,34.0 L459.6,34.0 L461.2,34.2 L462.7,34.5 L464.2,34.7 L465.7,34.9 L467.2,34.7 L468.8,34.5 L470.3,34.2 L471.8,34.0 L473.3,34.0 L476.1,34.0" fill="none" stroke="#EF843C" stroke-width="1" stroke-linejoin="round"/></svg><div class="legend"><span class="li"><i style="background:#7EB26D"></i>User</span><span class="li"><i style="background:#EAB839"></i>System</span><span class="li"><i style="background:#6ED0E0"></i>Iowait</span><span class="li"><i style="background:#EF843C"></i>idle</span></div><div class="lscroll"></div><div class="resz"></div></div><div class="panel" style="left:571px;top:159px;width:504px;height:201px"><div class="ptitle">PUT Account/Container/Object</div><svg class="chart" width="504" height="201" viewBox="0 0 504 201"><line x1="20" y1="33.5" x2="487" y2="33.5" class="g"/><text x="15" y="36.2" class="yl">80</text><line x1="20" y1="65.5" x2="487" y2="65.5" class="g"/><text x="15" y="68.0" class="yl">60</text><line x1="20" y1="96.5" x2="487" y2="96.5" class="g"/><text x="15" y="99.7" class="yl">40</text><line x1="20" y1="128.5" x2="487" y2="128.5" class="g"/><text x="15" y="131.4" class="yl">20</text><line x1="20" y1="160.5" x2="487" y2="160.5" class="g"/><text x="15" y="163.2" class="yl">0</text><line x1="55.5" y1="33" x2="55.5" y2="160" class="g"/><text x="55.3" y="173" class="xl">18:26</text><line x1="118.5" y1="33" x2="118.5" y2="160" class="g"/><text x="117.6" y="173" class="xl">18:28</text><line x1="180.5" y1="33" x2="180.5" y2="160" class="g"/><text x="179.8" y="173" class="xl">18:30</text><line x1="242.5" y1="33" x2="242.5" y2="160" class="g"/><text x="242.1" y="173" class="xl">18:32</text><line x1="304.5" y1="33" x2="304.5" y2="160" class="g"/><text x="304.4" y="173" class="xl">18:34</text><line x1="367.5" y1="33" x2="367.5" y2="160" class="g"/><text x="366.6" y="173" class="xl">18:36</text><line x1="429.5" y1="33" x2="429.5" y2="160" class="g"/><text x="428.9" y="173" class="xl">18:38</text><path d="M20.0,160.5 L20.0,160.5 L200.9,160.5 L211.2,52.5 L216.1,51.0 L226.7,160.5 L475.8,160.5 L475.8,160.5 Z" fill="#6ED0E0" fill-opacity="0.1" stroke="none"/><path d="M20.0,160.5 L200.9,160.5 L211.2,52.5 L216.1,51.0 L226.7,160.5 L475.8,160.5" fill="none" stroke="#6ED0E0" stroke-width="1" stroke-linejoin="round"/></svg><div class="legend w"><span class="li hid"><i style="background:#7EB26D"></i>put container<b class="tot">Total: 200</b></span><span class="li hid"><i style="background:#EAB839"></i>put account<b class="tot">Total: 28</b></span><span class="li bold"><i style="background:#6ED0E0"></i>put object<b class="tot">Total: 199</b></span></div><div class="lscroll"></div><div class="resz"></div></div><div class="panel" style="left:1084px;top:159px;width:504px;height:201px"><div class="ptitle">Disk BW</div><svg class="chart" width="504" height="201" viewBox="0 0 504 201"><line x1="42.40000000000009" y1="33.5" x2="487" y2="33.5" class="g"/><text x="37.40000000000009" y="36.2" class="yl">200 MBs</text><line x1="42.40000000000009" y1="65.5" x2="487" y2="65.5" class="g"/><text x="37.40000000000009" y="68.0" class="yl">150 MBs</text><line x1="42.40000000000009" y1="96.5" x2="487" y2="96.5" class="g"/><text x="37.40000000000009" y="99.7" class="yl">100 MBs</text><line x1="42.40000000000009" y1="128.5" x2="487" y2="128.5" class="g"/><text x="37.40000000000009" y="131.4" class="yl">50 MBs</text><line x1="42.40000000000009" y1="160.5" x2="487" y2="160.5" class="g"/><text x="37.40000000000009" y="163.2" class="yl">0 kBs</text><line x1="76.5" y1="33" x2="76.5" y2="160" class="g"/><text x="76.0" y="173" class="xl">18:26</text><line x1="135.5" y1="33" x2="135.5" y2="160" class="g"/><text x="135.3" y="173" class="xl">18:28</text><line x1="195.5" y1="33" x2="195.5" y2="160" class="g"/><text x="194.6" y="173" class="xl">18:30</text><line x1="254.5" y1="33" x2="254.5" y2="160" class="g"/><text x="253.8" y="173" class="xl">18:32</text><line x1="313.5" y1="33" x2="313.5" y2="160" class="g"/><text x="313.1" y="173" class="xl">18:34</text><line x1="372.5" y1="33" x2="372.5" y2="160" class="g"/><text x="372.4" y="173" class="xl">18:36</text><line x1="432.5" y1="33" x2="432.5" y2="160" class="g"/><text x="431.7" y="173" class="xl">18:38</text><path d="M42.4,160.5 L42.4,154.2 L131.9,154.5 L135.5,156.7 L139.0,160.2 L175.8,160.0 L179.6,158.9 L184.7,154.2 L230.0,154.2 L238.3,74.8 L248.7,154.2 L476.3,154.2 L476.3,160.5 Z" fill="#7EB26D" fill-opacity="0.1" stroke="none"/><path d="M42.4,160.5 L42.4,154.2 L51.3,154.2 L60.2,154.3 L69.1,154.1 L78.0,154.4 L86.9,154.1 L95.8,154.2 L104.6,154.4 L113.5,154.1 L122.4,154.4 L131.9,154.5 L135.5,156.7 L139.0,160.2 L175.8,160.0 L179.6,158.9 L184.7,154.2 L214.3,154.2 L224.4,69.7 L229.4,66.5 L234.5,81.1 L239.2,73.5 L244.5,135.1 L248.7,154.2 L249.9,154.2 L258.8,154.4 L267.7,154.4 L276.6,154.2 L285.4,153.9 L294.3,154.4 L303.2,154.3 L312.1,154.1 L321.0,153.9 L329.9,154.1 L338.8,154.2 L347.7,153.8 L356.6,154.4 L365.5,153.9 L374.4,154.3 L383.3,154.4 L392.2,154.4 L401.0,154.3 L409.9,153.9 L418.8,154.4 L427.7,154.1 L436.6,154.1 L445.5,154.2 L454.4,154.1 L463.3,154.4 L472.2,154.4 L476.3,154.2 L476.3,160.5 Z" fill="#EAB839" fill-opacity="0.1" stroke="none"/><path d="M42.4,154.2 L131.9,154.5 L135.5,156.7 L139.0,160.2 L175.8,160.0 L179.6,158.9 L184.7,154.2 L230.0,154.2 L238.3,74.8 L248.7,154.2 L476.3,154.2" fill="none" stroke="#7EB26D" stroke-width="1" stroke-linejoin="round"/><path d="M42.4,154.2 L51.3,154.2 L60.2,154.3 L69.1,154.1 L78.0,154.4 L86.9,154.1 L95.8,154.2 L104.6,154.4 L113.5,154.1 L122.4,154.4 L131.9,154.5 L135.5,156.7 L139.0,160.2 L175.8,160.0 L179.6,158.9 L184.7,154.2 L214.3,154.2 L224.4,69.7 L229.4,66.5 L234.5,81.1 L239.2,73.5 L244.5,135.1 L248.7,154.2 L249.9,154.2 L258.8,154.4 L267.7,154.4 L276.6,154.2 L285.4,153.9 L294.3,154.4 L303.2,154.3 L312.1,154.1 L321.0,153.9 L329.9,154.1 L338.8,154.2 L347.7,153.8 L356.6,154.4 L365.5,153.9 L374.4,154.3 L383.3,154.4 L392.2,154.4 L401.0,154.3 L409.9,153.9 L418.8,154.4 L427.7,154.1 L436.6,154.1 L445.5,154.2 L454.4,154.1 L463.3,154.4 L472.2,154.4 L476.3,154.2" fill="none" stroke="#EAB839" stroke-width="1" stroke-linejoin="round"/></svg><div class="legend"><span class="li"><i style="background:#7EB26D"></i>Read</span><span class="li"><i style="background:#EAB839"></i>Write</span></div><div class="lscroll"></div><div class="resz"></div></div><div class="panel" style="left:58px;top:369px;width:504px;height:201px"><div class="ptitle">Memory Utilization</div><svg class="chart" width="504" height="201" viewBox="0 0 504 201"><line x1="37" y1="33.5" x2="487" y2="33.5" class="g"/><text x="32" y="36.2" class="yl">100 GB</text><line x1="37" y1="65.5" x2="487" y2="65.5" class="g"/><text x="32" y="68.0" class="yl">75 GB</text><line x1="37" y1="96.5" x2="487" y2="96.5" class="g"/><text x="32" y="99.7" class="yl">50 GB</text><line x1="37" y1="128.5" x2="487" y2="128.5" class="g"/><text x="32" y="131.4" class="yl">25 GB</text><line x1="37" y1="160.5" x2="487" y2="160.5" class="g"/><text x="32" y="163.2" class="yl">0 MB</text><line x1="71.5" y1="33" x2="71.5" y2="160" class="g"/><text x="71.0" y="173" class="xl">18:26</text><line x1="131.5" y1="33" x2="131.5" y2="160" class="g"/><text x="131.0" y="173" class="xl">18:28</text><line x1="191.5" y1="33" x2="191.5" y2="160" class="g"/><text x="191.0" y="173" class="xl">18:30</text><line x1="251.5" y1="33" x2="251.5" y2="160" class="g"/><text x="251.0" y="173" class="xl">18:32</text><line x1="311.5" y1="33" x2="311.5" y2="160" class="g"/><text x="311.0" y="173" class="xl">18:34</text><line x1="371.5" y1="33" x2="371.5" y2="160" class="g"/><text x="371.0" y="173" class="xl">18:36</text><line x1="431.5" y1="33" x2="431.5" y2="160" class="g"/><text x="431.0" y="173" class="xl">18:38</text><path d="M37.0,160.5 L37.0,155.5 L476.2,155.5 L476.2,160.5 Z" fill="#7EB26D" fill-opacity="0.1" stroke="none"/><path d="M37.0,150.0 L476.2,150.0 L476.2,155.5 L37.0,155.5 Z" fill="#EAB839" fill-opacity="0.1" stroke="none"/><path d="M37.0,149.7 L476.2,149.6 L476.2,150.0 L37.0,150.0 Z" fill="#6ED0E0" fill-opacity="0.1" stroke="none"/><path d="M37.0,37.8 L476.2,37.8 L476.2,149.6 L37.0,149.7 Z" fill="#EF843C" fill-opacity="0.1" stroke="none"/><path d="M37.0,155.5 L476.2,155.5" fill="none" stroke="#7EB26D" stroke-width="1" stroke-linejoin="round"/><path d="M37.0,150.0 L476.2,150.0" fill="none" stroke="#EAB839" stroke-width="1" stroke-linejoin="round"/><path d="M37.0,149.7 L476.2,149.6" fill="none" stroke="#6ED0E0" stroke-width="1" stroke-linejoin="round"/><path d="M37.0,37.8 L476.2,37.8" fill="none" stroke="#EF843C" stroke-width="1" stroke-linejoin="round"/></svg><div class="legend"><span class="li"><i style="background:#7EB26D"></i>Used</span><span class="li"><i style="background:#EAB839"></i>Cached</span><span class="li"><i style="background:#6ED0E0"></i>Buffers</span><span class="li"><i style="background:#EF843C"></i>Free</span></div><div class="lscroll"></div><div class="resz"></div></div><div class="panel" style="left:571px;top:369px;width:504px;height:201px"><div class="ptitle">GET &amp; HEAD Account/Container/Object</div><svg class="chart" width="504" height="201" viewBox="0 0 504 201"><line x1="20" y1="33.5" x2="487" y2="33.5" class="g"/><text x="15" y="36.2" class="yl">80</text><line x1="20" y1="65.5" x2="487" y2="65.5" class="g"/><text x="15" y="68.0" class="yl">60</text><line x1="20" y1="96.5" x2="487" y2="96.5" class="g"/><text x="15" y="99.7" class="yl">40</text><line x1="20" y1="128.5" x2="487" y2="128.5" class="g"/><text x="15" y="131.4" class="yl">20</text><line x1="20" y1="160.5" x2="487" y2="160.5" class="g"/><text x="15" y="163.2" class="yl">0</text><line x1="55.5" y1="33" x2="55.5" y2="160" class="g"/><text x="55.3" y="173" class="xl">18:26</text><line x1="118.5" y1="33" x2="118.5" y2="160" class="g"/><text x="117.6" y="173" class="xl">18:28</text><line x1="180.5" y1="33" x2="180.5" y2="160" class="g"/><text x="179.8" y="173" class="xl">18:30</text><line x1="242.5" y1="33" x2="242.5" y2="160" class="g"/><text x="242.1" y="173" class="xl">18:32</text><line x1="304.5" y1="33" x2="304.5" y2="160" class="g"/><text x="304.4" y="173" class="xl">18:34</text><line x1="367.5" y1="33" x2="367.5" y2="160" class="g"/><text x="366.6" y="173" class="xl">18:36</text><line x1="429.5" y1="33" x2="429.5" y2="160" class="g"/><text x="428.9" y="173" class="xl">18:38</text><path d="M20.0,160.5 L20.0,160.5 L216.1,160.5 L222.4,128.8 L226.7,57.3 L232.3,136.7 L237.3,160.5 L475.8,160.5 L475.8,160.5 Z" fill="#6ED0E0" fill-opacity="0.1" stroke="none"/><path d="M20.0,160.5 L216.1,160.5 L222.4,128.8 L226.7,57.3 L232.3,136.7 L237.3,160.5 L475.8,160.5" fill="none" stroke="#6ED0E0" stroke-width="1" stroke-linejoin="round"/></svg><div class="legend w"><span class="li hid"><i style="background:#7EB26D"></i>head account<b class="tot">Total: 0</b></span><span class="li hid"><i style="background:#EAB839"></i>head container<b class="tot">Total: 0</b></span><span class="li bold"><i style="background:#6ED0E0"></i>get object<b class="tot">Total: 100</b></span></div><div class="lscroll"></div><div class="resz"></div></div><div class="panel" style="left:1084px;top:369px;width:504px;height:201px"><div class="ptitle">Per Disk BW</div><svg class="chart" width="504" height="201" viewBox="0 0 504 201"><line x1="38" y1="33.5" x2="487" y2="33.5" class="g"/><text x="33" y="36.2" class="yl">25 MBs</text><line x1="38" y1="58.5" x2="487" y2="58.5" class="g"/><text x="33" y="61.6" class="yl">20 MBs</text><line x1="38" y1="84.5" x2="487" y2="84.5" class="g"/><text x="33" y="87.0" class="yl">15 MBs</text><line x1="38" y1="109.5" x2="487" y2="109.5" class="g"/><text x="33" y="112.4" class="yl">10 MBs</text><line x1="38" y1="135.5" x2="487" y2="135.5" class="g"/><text x="33" y="137.8" class="yl">5 MBs</text><line x1="38" y1="160.5" x2="487" y2="160.5" class="g"/><text x="33" y="163.2" class="yl">0 kBs</text><line x1="72.5" y1="33" x2="72.5" y2="160" class="g"/><text x="71.9" y="173" class="xl">18:26</text><line x1="132.5" y1="33" x2="132.5" y2="160" class="g"/><text x="131.8" y="173" class="xl">18:28</text><line x1="192.5" y1="33" x2="192.5" y2="160" class="g"/><text x="191.7" y="173" class="xl">18:30</text><line x1="252.5" y1="33" x2="252.5" y2="160" class="g"/><text x="251.5" y="173" class="xl">18:32</text><line x1="311.5" y1="33" x2="311.5" y2="160" class="g"/><text x="311.4" y="173" class="xl">18:34</text><line x1="371.5" y1="33" x2="371.5" y2="160" class="g"/><text x="371.3" y="173" class="xl">18:36</text><line x1="431.5" y1="33" x2="431.5" y2="160" class="g"/><text x="431.1" y="173" class="xl">18:38</text><path d="M38.0,160.5 L38.0,160.5 L97.9,160.5 L102.4,145.3 L106.8,109.7 L117.0,109.7 L122.1,150.3 L127.2,160.5 L217.6,160.5 L226.6,104.6 L231.1,107.2 L236.8,112.2 L244.5,155.4 L250.5,160.5 L476.2,160.5 L476.2,160.5 Z" fill="#705DA0" fill-opacity="0.1" stroke="none"/><path d="M38.0,160.5 L38.0,160.5 L173.0,160.5 L177.5,152.9 L182.0,109.7 L187.1,109.7 L192.2,130.0 L196.6,160.5 L217.6,160.5 L229.9,105.6 L236.8,105.6 L245.7,160.5 L476.2,160.5 L476.2,160.5 Z" fill="#BA43A9" fill-opacity="0.1" stroke="none"/><path d="M38.0,160.5 L38.0,160.5 L212.2,160.5 L220.6,117.3 L225.7,113.3 L231.1,122.4 L235.6,119.9 L241.5,150.3 L247.5,160.5 L476.2,160.5 L476.2,160.5 Z" fill="#7EB26D" fill-opacity="0.1" stroke="none"/><path d="M38.0,160.5 L38.0,160.5 L212.2,160.5 L216.1,156.4 L220.6,159.0 L225.1,156.9 L232.6,159.5 L238.6,160.5 L476.2,160.5 L476.2,160.5 Z" fill="#6ED0E0" fill-opacity="0.1" stroke="none"/><path d="M38.0,160.5 L38.0,160.5 L212.2,160.5 L220.6,109.7 L225.7,104.6 L231.1,130.0 L236.8,160.5 L476.2,160.5 L476.2,160.5 Z" fill="#EF843C" fill-opacity="0.1" stroke="none"/><path d="M38.0,160.5 L38.0,160.5 L212.2,160.5 L220.6,114.8 L225.7,99.5 L231.1,119.9 L236.8,160.5 L476.2,160.5 L476.2,160.5 Z" fill="#E24D42" fill-opacity="0.1" stroke="none"/><path d="M38.0,160.5 L38.0,160.5 L212.2,160.5 L219.1,102.1 L225.7,97.0 L232.6,145.3 L236.8,160.5 L476.2,160.5 L476.2,160.5 Z" fill="#EAB839" fill-opacity="0.1" stroke="none"/><path d="M38.0,160.5 L38.0,160.5 L256.8,160.5 L266.4,109.7 L274.5,109.7 L277.5,111.7 L282.3,109.7 L291.8,109.7 L296.6,160.5 L476.2,160.5 L476.2,160.5 Z" fill="#508642" fill-opacity="0.1" stroke="none"/><path d="M38.0,160.5 L38.0,160.5 L226.6,160.5 L232.6,119.9 L236.8,51.3 L242.4,91.9 L246.9,109.7 L256.5,109.7 L266.4,160.5 L476.2,160.5 L476.2,160.5 Z" fill="#CCA300" fill-opacity="0.1" stroke="none"/><path d="M38.0,160.5 L97.9,160.5 L102.4,145.3 L106.8,109.7 L117.0,109.7 L122.1,150.3 L127.2,160.5 L217.6,160.5 L226.6,104.6 L231.1,107.2 L236.8,112.2 L244.5,155.4 L250.5,160.5 L476.2,160.5" fill="none" stroke="#705DA0" stroke-width="1" stroke-linejoin="round"/><path d="M38.0,160.5 L173.0,160.5 L177.5,152.9 L182.0,109.7 L187.1,109.7 L192.2,130.0 L196.6,160.5 L217.6,160.5 L229.9,105.6 L236.8,105.6 L245.7,160.5 L476.2,160.5" fill="none" stroke="#BA43A9" stroke-width="1" stroke-linejoin="round"/><path d="M38.0,160.5 L212.2,160.5 L220.6,117.3 L225.7,113.3 L231.1,122.4 L235.6,119.9 L241.5,150.3 L247.5,160.5 L476.2,160.5" fill="none" stroke="#7EB26D" stroke-width="1" stroke-linejoin="round"/><path d="M38.0,160.5 L212.2,160.5 L216.1,156.4 L220.6,159.0 L225.1,156.9 L232.6,159.5 L238.6,160.5 L476.2,160.5" fill="none" stroke="#6ED0E0" stroke-width="1" stroke-linejoin="round"/><path d="M38.0,160.5 L212.2,160.5 L220.6,109.7 L225.7,104.6 L231.1,130.0 L236.8,160.5 L476.2,160.5" fill="none" stroke="#EF843C" stroke-width="1" stroke-linejoin="round"/><path d="M38.0,160.5 L212.2,160.5 L220.6,114.8 L225.7,99.5 L231.1,119.9 L236.8,160.5 L476.2,160.5" fill="none" stroke="#E24D42" stroke-width="1" stroke-linejoin="round"/><path d="M38.0,160.5 L212.2,160.5 L219.1,102.1 L225.7,97.0 L232.6,145.3 L236.8,160.5 L476.2,160.5" fill="none" stroke="#EAB839" stroke-width="1" stroke-linejoin="round"/><path d="M38.0,160.5 L256.8,160.5 L266.4,109.7 L274.5,109.7 L277.5,111.7 L282.3,109.7 L291.8,109.7 L296.6,160.5 L476.2,160.5" fill="none" stroke="#508642" stroke-width="1" stroke-linejoin="round"/><path d="M38.0,160.5 L226.6,160.5 L232.6,119.9 L236.8,51.3 L242.4,91.9 L246.9,109.7 L256.5,109.7 L266.4,160.5 L476.2,160.5" fill="none" stroke="#CCA300" stroke-width="1" stroke-linejoin="round"/></svg><div class="legend"><span class="li"><i style="background:#7EB26D"></i>sdb-w</span><span class="li"><i style="background:#EAB839"></i>sdc-w</span><span class="li"><i style="background:#6ED0E0"></i>sdd-w</span><span class="li"><i style="background:#EF843C"></i>sde-w</span><span class="li"><i style="background:#E24D42"></i>sdf-w</span><span class="li"><i style="background:#1F78C1"></i>sdb-r</span><span class="li"><i style="background:#BA43A9"></i>sdc-r</span><span class="li"><i style="background:#705DA0"></i>sdd-r</span><span class="li"><i style="background:#508642"></i>sde-r</span><span class="li"><i style="background:#CCA300"></i>sdf-r</span></div><div class="lscroll"></div><div class="resz"></div></div><div class="panel" style="left:58px;top:579px;width:504px;height:201px"><div class="ptitle">Network Bandwidth</div><svg class="chart" width="504" height="201" viewBox="0 0 504 201"><line x1="47" y1="33.5" x2="487" y2="33.5" class="g"/><text x="42" y="36.2" class="yl">2.0 Gbps</text><line x1="47" y1="65.5" x2="487" y2="65.5" class="g"/><text x="42" y="68.0" class="yl">1.5 Gbps</text><line x1="47" y1="96.5" x2="487" y2="96.5" class="g"/><text x="42" y="99.7" class="yl">1.0 Gbps</text><line x1="47" y1="128.5" x2="487" y2="128.5" class="g"/><text x="42" y="131.4" class="yl">500 Mbps</text><line x1="47" y1="160.5" x2="487" y2="160.5" class="g"/><text x="42" y="163.2" class="yl">0 kbps</text><line x1="80.5" y1="33" x2="80.5" y2="160" class="g"/><text x="80.2" y="173" class="xl">18:26</text><line x1="139.5" y1="33" x2="139.5" y2="160" class="g"/><text x="138.9" y="173" class="xl">18:28</text><line x1="198.5" y1="33" x2="198.5" y2="160" class="g"/><text x="197.6" y="173" class="xl">18:30</text><line x1="256.5" y1="33" x2="256.5" y2="160" class="g"/><text x="256.2" y="173" class="xl">18:32</text><line x1="315.5" y1="33" x2="315.5" y2="160" class="g"/><text x="314.9" y="173" class="xl">18:34</text><line x1="374.5" y1="33" x2="374.5" y2="160" class="g"/><text x="373.6" y="173" class="xl">18:36</text><line x1="432.5" y1="33" x2="432.5" y2="160" class="g"/><text x="432.2" y="173" class="xl">18:38</text><path d="M47.0,160.5 L47.0,160.5 L216.8,160.5 L221.2,141.4 L227.4,107.8 L237.4,105.3 L241.8,108.4 L246.8,154.2 L251.2,160.5 L476.4,160.5 L476.4,160.5 Z" fill="#7EB26D" fill-opacity="0.1" stroke="none"/><path d="M47.0,160.5 L47.0,160.5 L216.8,160.5 L227.4,51.3 L232.4,50.0 L237.4,71.6 L242.4,57.0 L246.8,138.3 L251.2,160.5 L476.4,160.5 L476.4,160.5 Z" fill="#EAB839" fill-opacity="0.1" stroke="none"/><path d="M47.0,160.5 L216.8,160.5 L221.2,141.4 L227.4,107.8 L237.4,105.3 L241.8,108.4 L246.8,154.2 L251.2,160.5 L476.4,160.5" fill="none" stroke="#7EB26D" stroke-width="1" stroke-linejoin="round"/><path d="M47.0,160.5 L216.8,160.5 L227.4,51.3 L232.4,50.0 L237.4,71.6 L242.4,57.0 L246.8,138.3 L251.2,160.5 L476.4,160.5" fill="none" stroke="#EAB839" stroke-width="1" stroke-linejoin="round"/></svg><div class="legend"><span class="li"><i style="background:#7EB26D"></i>recieved</span><span class="li"><i style="background:#EAB839"></i>sent</span></div><div class="lscroll"></div><div class="resz"></div></div><div class="panel" style="left:571px;top:579px;width:504px;height:201px"><div class="ptitle">DELETE Container/Object</div><svg class="chart" width="504" height="201" viewBox="0 0 504 201"><line x1="24.5" y1="33.5" x2="487" y2="33.5" class="g"/><text x="19.5" y="36.2" class="yl">1.0</text><line x1="24.5" y1="65.5" x2="487" y2="65.5" class="g"/><text x="19.5" y="68.0" class="yl">0.5</text><line x1="24.5" y1="96.5" x2="487" y2="96.5" class="g"/><text x="19.5" y="99.7" class="yl">0</text><line x1="24.5" y1="128.5" x2="487" y2="128.5" class="g"/><text x="19.5" y="131.4" class="yl">-0.5</text><line x1="24.5" y1="160.5" x2="487" y2="160.5" class="g"/><text x="19.5" y="163.2" class="yl">-1.0</text><line x1="59.5" y1="33" x2="59.5" y2="160" class="g"/><text x="59.4" y="173" class="xl">18:26</text><line x1="121.5" y1="33" x2="121.5" y2="160" class="g"/><text x="121.1" y="173" class="xl">18:28</text><line x1="183.5" y1="33" x2="183.5" y2="160" class="g"/><text x="182.8" y="173" class="xl">18:30</text><line x1="244.5" y1="33" x2="244.5" y2="160" class="g"/><text x="244.4" y="173" class="xl">18:32</text><line x1="306.5" y1="33" x2="306.5" y2="160" class="g"/><text x="306.1" y="173" class="xl">18:34</text><line x1="368.5" y1="33" x2="368.5" y2="160" class="g"/><text x="367.8" y="173" class="xl">18:36</text><line x1="429.5" y1="33" x2="429.5" y2="160" class="g"/><text x="429.4" y="173" class="xl">18:38</text><path d="M24.5,96.5 L475.9,96.5" fill="none" stroke="#8cc9ae" stroke-width="1" stroke-linejoin="round"/></svg><div class="legend w"><span class="li"><i style="background:#7EB26D"></i>delete objects<b class="tot">Total: 0</b></span><span class="li"><i style="background:#EAB839"></i>delete containers<b class="tot">Total: 0</b></span><span class="li"><i style="background:#6ED0E0"></i>delete containers<b class="tot">Total: 0</b></span></div><div class="lscroll"></div><div class="resz"></div></div><div class="panel" style="left:1084px;top:579px;width:504px;height:201px"><div class="ptitle">Per Disk Throughput</div><svg class="chart" width="504" height="201" viewBox="0 0 504 201"><line x1="39.200000000000045" y1="33.5" x2="487" y2="33.5" class="g"/><text x="34.200000000000045" y="36.2" class="yl">200</text><line x1="39.200000000000045" y1="65.5" x2="487" y2="65.5" class="g"/><text x="34.200000000000045" y="68.0" class="yl">150</text><line x1="39.200000000000045" y1="96.5" x2="487" y2="96.5" class="g"/><text x="34.200000000000045" y="99.7" class="yl">100</text><line x1="39.200000000000045" y1="128.5" x2="487" y2="128.5" class="g"/><text x="34.200000000000045" y="131.4" class="yl">50</text><line x1="39.200000000000045" y1="160.5" x2="487" y2="160.5" class="g"/><text x="34.200000000000045" y="163.2" class="yl">0</text><line x1="73.5" y1="33" x2="73.5" y2="160" class="g"/><text x="73.0" y="173" class="xl">18:26</text><line x1="133.5" y1="33" x2="133.5" y2="160" class="g"/><text x="132.7" y="173" class="xl">18:28</text><line x1="192.5" y1="33" x2="192.5" y2="160" class="g"/><text x="192.4" y="173" class="xl">18:30</text><line x1="252.5" y1="33" x2="252.5" y2="160" class="g"/><text x="252.2" y="173" class="xl">18:32</text><line x1="312.5" y1="33" x2="312.5" y2="160" class="g"/><text x="311.9" y="173" class="xl">18:34</text><line x1="372.5" y1="33" x2="372.5" y2="160" class="g"/><text x="371.6" y="173" class="xl">18:36</text><line x1="431.5" y1="33" x2="431.5" y2="160" class="g"/><text x="431.3" y="173" class="xl">18:38</text><path d="M39.2,160.5 L39.2,159.4 L44.3,160.1 L49.4,159.4 L54.4,159.5 L59.5,159.7 L64.6,159.9 L69.7,159.0 L74.7,160.5 L79.8,159.6 L84.9,159.9 L90.0,160.5 L95.0,160.4 L97.4,160.5 L102.5,146.5 L107.6,109.7 L117.1,108.4 L122.2,146.5 L127.0,160.5 L130.6,159.6 L135.6,159.8 L140.7,160.1 L145.8,160.4 L150.9,160.1 L155.9,160.1 L161.0,159.7 L166.1,160.1 L171.2,160.1 L176.2,160.1 L181.3,159.3 L186.4,160.2 L191.5,159.9 L196.5,159.8 L201.6,160.0 L206.7,160.4 L211.8,160.3 L216.8,159.6 L221.3,157.3 L227.3,122.4 L237.1,106.5 L245.2,147.8 L252.4,159.7 L257.4,159.9 L262.5,158.6 L267.6,160.0 L272.7,160.2 L277.7,160.4 L282.8,159.4 L287.9,159.4 L293.0,159.6 L298.0,160.0 L303.1,158.8 L308.2,160.2 L313.3,159.7 L318.3,160.1 L323.4,159.6 L328.5,158.7 L333.6,159.9 L338.6,160.3 L343.7,158.7 L348.8,159.2 L353.9,158.9 L358.9,159.9 L364.0,159.1 L369.1,160.1 L374.2,158.9 L379.2,160.2 L384.3,160.3 L389.4,160.0 L394.5,160.4 L399.5,159.8 L404.6,160.2 L409.7,158.8 L414.8,159.9 L419.8,159.9 L424.9,160.4 L430.0,158.8 L435.1,159.6 L440.1,159.3 L445.2,159.1 L450.3,158.6 L455.4,159.5 L460.4,159.6 L465.5,159.8 L470.6,159.6 L475.7,159.2 L475.7,160.5 Z" fill="#705DA0" fill-opacity="0.1" stroke="none"/><path d="M39.2,160.5 L39.2,159.2 L44.3,160.4 L49.4,159.8 L54.4,159.0 L59.5,159.9 L64.6,159.2 L69.7,159.7 L74.7,158.8 L79.8,158.9 L84.9,159.2 L90.0,159.7 L95.0,160.5 L100.1,158.8 L105.2,160.3 L110.3,159.6 L115.3,159.7 L120.4,159.9 L125.5,160.3 L130.6,160.5 L135.6,158.9 L140.7,159.7 L145.8,159.6 L150.9,160.4 L155.9,159.6 L161.0,159.9 L166.1,159.8 L172.0,160.5 L176.5,154.2 L181.6,108.4 L186.4,107.8 L190.9,128.8 L195.9,157.3 L201.6,159.7 L206.7,159.0 L211.8,159.5 L218.3,157.3 L227.3,123.7 L237.1,97.0 L243.7,122.4 L251.2,141.4 L257.1,158.6 L262.5,159.6 L267.6,160.0 L272.7,160.2 L277.7,160.5 L282.8,159.3 L287.9,159.5 L293.0,160.5 L298.0,159.0 L303.1,159.9 L308.2,159.5 L313.3,159.3 L318.3,158.7 L323.4,160.3 L328.5,158.8 L333.6,158.7 L338.6,159.2 L343.7,160.3 L348.8,160.0 L353.9,159.8 L358.9,158.8 L364.0,160.0 L369.1,158.6 L374.2,159.3 L379.2,159.6 L384.3,160.1 L389.4,158.8 L394.5,159.9 L399.5,159.8 L404.6,160.0 L409.7,159.1 L414.8,159.7 L419.8,159.6 L424.9,159.0 L430.0,160.3 L435.1,159.9 L440.1,159.8 L445.2,159.3 L450.3,159.5 L455.4,160.1 L460.4,159.7 L465.5,159.2 L470.6,160.3 L475.7,159.2 L475.7,160.5 Z" fill="#BA43A9" fill-opacity="0.1" stroke="none"/><path d="M39.2,160.5 L39.2,158.8 L44.3,159.7 L49.4,159.9 L54.4,159.9 L59.5,160.4 L64.6,160.0 L69.7,159.4 L74.7,159.9 L79.8,159.8 L84.9,158.3 L90.0,159.7 L95.0,159.8 L100.1,159.7 L105.2,158.3 L110.3,158.6 L115.3,159.4 L120.4,159.4 L125.5,160.2 L130.6,159.7 L135.6,159.8 L140.7,158.6 L145.8,158.8 L150.9,160.1 L155.9,159.2 L161.0,159.3 L166.1,160.1 L171.2,159.3 L176.2,159.9 L181.3,159.6 L186.4,158.8 L191.5,160.1 L196.5,159.6 L201.6,160.1 L206.7,159.7 L211.8,160.3 L213.8,158.6 L222.2,131.9 L227.3,125.6 L231.8,131.9 L237.1,112.9 L245.2,131.9 L254.1,151.0 L258.6,159.2 L262.5,159.7 L267.6,158.8 L272.7,159.9 L277.7,158.9 L282.8,159.1 L287.9,159.4 L293.0,160.3 L298.0,158.0 L303.1,159.7 L308.2,159.0 L313.3,159.3 L318.3,158.4 L323.4,159.6 L328.5,158.0 L333.6,159.3 L338.6,160.2 L343.7,159.2 L348.8,159.8 L353.9,158.8 L358.9,160.3 L364.0,159.6 L369.1,159.8 L374.2,159.6 L379.2,159.5 L384.3,158.6 L389.4,160.5 L394.5,160.3 L399.5,159.1 L404.6,159.8 L409.7,160.2 L414.8,160.4 L419.8,160.3 L424.9,159.5 L430.0,160.2 L435.1,159.4 L440.1,159.6 L445.2,159.1 L450.3,158.5 L455.4,158.2 L460.4,160.2 L465.5,159.9 L470.6,160.4 L475.7,159.6 L475.7,160.5 Z" fill="#7EB26D" fill-opacity="0.1" stroke="none"/><path d="M39.2,160.5 L39.2,158.7 L44.3,159.6 L49.4,159.9 L54.4,159.9 L59.5,158.8 L64.6,158.5 L69.7,159.9 L74.7,160.2 L79.8,158.5 L84.9,160.4 L90.0,158.8 L95.0,158.8 L100.1,159.6 L105.2,160.0 L110.3,160.1 L115.3,160.1 L120.4,159.7 L125.5,160.4 L130.6,158.9 L135.6,160.3 L140.7,160.0 L145.8,159.4 L150.9,158.5 L155.9,160.2 L161.0,160.4 L166.1,160.4 L171.2,160.4 L176.2,160.3 L181.3,158.8 L186.4,159.3 L191.5,159.4 L196.5,160.3 L201.6,159.9 L206.7,159.6 L211.8,160.1 L213.8,158.6 L222.2,123.7 L227.3,122.4 L231.8,141.4 L237.1,154.2 L241.9,140.2 L246.7,141.4 L254.1,155.4 L262.5,159.9 L267.6,158.1 L272.7,159.9 L277.7,160.1 L282.8,159.9 L287.9,160.2 L293.0,159.0 L298.0,160.2 L303.1,160.1 L308.2,159.0 L313.3,159.8 L318.3,158.4 L323.4,159.5 L328.5,160.0 L333.6,160.2 L338.6,159.9 L343.7,158.1 L348.8,159.6 L353.9,160.2 L358.9,158.7 L364.0,159.8 L369.1,159.1 L374.2,158.5 L379.2,159.6 L384.3,160.2 L389.4,160.1 L394.5,160.4 L399.5,160.3 L404.6,159.9 L409.7,158.1 L414.8,160.0 L419.8,159.5 L424.9,159.3 L430.0,159.7 L435.1,158.8 L440.1,160.0 L445.2,158.3 L450.3,158.0 L455.4,159.7 L460.4,160.4 L465.5,160.2 L470.6,159.5 L475.7,160.5 L475.7,160.5 Z" fill="#EF843C" fill-opacity="0.1" stroke="none"/><path d="M39.2,160.5 L39.2,160.5 L44.3,160.3 L49.4,160.5 L54.4,159.9 L59.5,159.5 L64.6,159.9 L69.7,160.2 L74.7,160.1 L79.8,159.7 L84.9,160.3 L90.0,160.0 L95.0,159.6 L100.1,160.3 L105.2,159.8 L110.3,158.7 L115.3,160.1 L120.4,159.6 L125.5,158.7 L130.6,160.2 L135.6,158.7 L140.7,159.8 L145.8,159.6 L150.9,160.4 L155.9,160.4 L161.0,158.9 L166.1,159.7 L171.2,160.2 L176.2,160.2 L181.3,159.9 L186.4,160.2 L191.5,160.2 L196.5,160.4 L201.6,159.7 L206.7,160.3 L211.8,159.8 L213.8,158.6 L222.2,123.7 L227.3,121.1 L233.2,146.5 L237.1,152.9 L241.9,138.3 L248.2,144.6 L255.6,158.6 L262.5,160.3 L267.6,160.5 L272.7,159.3 L277.7,159.8 L282.8,159.8 L287.9,159.9 L293.0,159.7 L298.0,159.6 L303.1,159.2 L308.2,159.8 L313.3,160.2 L318.3,158.6 L323.4,158.8 L328.5,160.2 L333.6,159.3 L338.6,160.2 L343.7,160.2 L348.8,159.8 L353.9,158.9 L358.9,159.9 L364.0,160.4 L369.1,159.8 L374.2,160.0 L379.2,158.8 L384.3,159.0 L389.4,159.0 L394.5,159.3 L399.5,159.9 L404.6,159.5 L409.7,160.1 L414.8,159.4 L419.8,160.3 L424.9,159.6 L430.0,159.2 L435.1,160.2 L440.1,159.6 L445.2,160.1 L450.3,160.3 L455.4,158.6 L460.4,158.8 L465.5,159.8 L470.6,159.3 L475.7,159.2 L475.7,160.5 Z" fill="#E24D42" fill-opacity="0.1" stroke="none"/><path d="M39.2,160.5 L39.2,159.6 L44.3,159.6 L49.4,159.2 L54.4,159.3 L59.5,159.9 L64.6,160.2 L69.7,160.2 L74.7,159.6 L79.8,158.8 L84.9,159.9 L90.0,159.6 L95.0,160.2 L100.1,159.9 L105.2,159.0 L110.3,159.7 L115.3,159.6 L120.4,160.4 L125.5,159.7 L130.6,160.0 L135.6,160.2 L140.7,159.6 L145.8,159.2 L150.9,160.5 L155.9,160.0 L161.0,160.0 L166.1,160.1 L171.2,160.0 L176.2,160.2 L181.3,159.7 L186.4,159.5 L191.5,160.1 L196.5,159.5 L201.6,159.8 L206.7,159.7 L211.8,160.3 L213.8,159.2 L216.8,114.8 L221.6,146.5 L226.7,122.4 L236.2,144.6 L241.9,135.1 L248.2,158.6 L257.1,160.5 L262.5,160.4 L267.6,159.1 L272.7,160.4 L277.7,160.1 L282.8,159.6 L287.9,160.3 L294.4,160.5 L299.2,151.0 L303.4,160.5 L308.2,158.8 L313.3,160.1 L318.3,160.1 L323.4,159.7 L328.5,160.3 L333.6,160.5 L338.6,159.9 L343.7,160.4 L348.8,160.2 L353.9,159.5 L358.9,159.4 L364.0,159.6 L369.1,159.3 L374.2,159.8 L379.2,159.6 L384.3,159.8 L389.4,159.9 L394.5,159.1 L399.5,159.8 L404.6,159.6 L409.7,159.9 L414.8,159.7 L419.8,160.4 L424.9,160.5 L430.0,160.4 L435.1,159.8 L440.1,159.5 L445.2,159.7 L450.3,159.9 L455.4,159.6 L460.4,159.3 L465.5,160.0 L470.6,159.4 L475.7,159.1 L475.7,160.5 Z" fill="#6ED0E0" fill-opacity="0.1" stroke="none"/><path d="M39.2,160.5 L39.2,159.5 L44.3,160.2 L49.4,159.8 L54.4,160.4 L59.5,160.0 L64.6,160.3 L69.7,160.1 L74.7,159.6 L79.8,159.2 L84.9,159.5 L90.0,160.4 L95.0,160.0 L100.1,160.3 L105.2,159.4 L110.3,160.2 L115.3,159.3 L120.4,159.2 L125.5,159.5 L130.6,159.6 L135.6,160.0 L140.7,159.5 L145.8,159.3 L150.9,159.5 L155.9,160.3 L161.0,159.3 L166.1,160.0 L171.2,159.5 L176.2,159.7 L181.3,159.8 L186.4,159.7 L191.5,160.2 L196.5,159.3 L201.6,160.2 L206.7,159.5 L211.8,159.9 L215.3,159.2 L224.3,128.8 L231.8,144.6 L237.1,152.9 L241.9,144.0 L246.7,159.2 L262.5,160.2 L267.6,160.0 L272.7,159.6 L277.7,160.5 L282.8,160.4 L287.9,159.7 L293.0,160.1 L298.0,160.4 L303.1,160.3 L308.2,160.2 L313.3,160.1 L318.3,160.0 L323.4,159.9 L328.5,159.8 L333.6,159.3 L338.6,160.3 L343.7,160.3 L348.8,160.5 L353.9,160.0 L358.9,159.4 L364.0,159.8 L369.1,160.0 L374.2,160.1 L379.2,159.8 L384.3,160.0 L389.4,159.8 L394.5,160.3 L399.5,159.6 L404.6,160.1 L409.7,159.9 L414.8,159.9 L419.8,160.2 L424.9,159.7 L430.0,159.5 L435.1,160.2 L440.1,159.6 L445.2,159.9 L450.3,159.9 L455.4,160.4 L460.4,159.7 L465.5,159.8 L470.6,160.3 L475.7,159.7 L475.7,160.5 Z" fill="#1F78C1" fill-opacity="0.1" stroke="none"/><path d="M39.2,160.5 L39.2,159.7 L44.3,160.2 L49.4,159.9 L54.4,159.9 L59.5,160.2 L64.6,160.2 L69.7,159.8 L74.7,159.6 L79.8,160.2 L84.9,160.0 L90.0,159.6 L95.0,159.7 L100.1,160.1 L105.2,159.3 L110.3,159.6 L115.3,159.7 L120.4,159.5 L125.5,160.1 L130.6,159.9 L135.6,160.4 L140.7,159.9 L145.8,160.2 L150.9,160.1 L155.9,159.9 L161.0,159.6 L166.1,159.8 L171.2,159.5 L176.2,160.0 L181.3,160.3 L186.4,160.4 L191.5,160.0 L196.5,159.3 L201.6,159.7 L206.7,159.9 L211.8,159.2 L216.8,159.6 L221.9,160.0 L227.0,160.3 L232.1,160.2 L237.1,159.6 L242.2,160.1 L247.3,160.2 L252.4,159.2 L257.1,160.5 L266.7,109.7 L271.8,111.0 L277.4,106.5 L282.8,109.7 L287.3,109.7 L291.8,107.8 L296.2,160.5 L303.1,159.4 L308.2,160.4 L313.3,159.5 L318.3,159.8 L323.4,160.4 L328.5,159.6 L333.6,159.8 L338.6,160.0 L343.7,160.3 L348.8,159.4 L353.9,159.7 L358.9,160.1 L364.0,160.4 L369.1,159.7 L374.2,159.8 L379.2,160.0 L384.3,159.6 L389.4,160.5 L394.5,159.7 L399.5,160.2 L404.6,160.2 L409.7,160.3 L414.8,160.1 L419.8,159.4 L424.9,160.3 L430.0,159.8 L435.1,160.4 L440.1,159.7 L445.2,159.6 L450.3,159.3 L455.4,160.0 L460.4,159.7 L465.5,159.3 L470.6,159.7 L475.7,160.1 L475.7,160.5 Z" fill="#508642" fill-opacity="0.1" stroke="none"/><path d="M39.2,160.5 L39.2,159.8 L44.3,158.6 L49.4,156.7 L54.4,159.9 L59.5,159.5 L64.6,159.5 L69.7,159.3 L74.7,158.3 L79.8,160.2 L84.9,158.4 L90.0,157.7 L95.0,160.1 L100.1,157.7 L105.2,160.1 L110.3,160.2 L115.3,159.7 L120.4,159.6 L125.5,158.4 L130.6,159.7 L135.6,160.0 L140.7,160.4 L145.8,160.5 L150.9,158.7 L155.9,158.7 L161.0,159.1 L166.1,159.7 L171.2,160.3 L176.2,159.1 L181.3,157.8 L186.4,160.0 L191.5,159.0 L196.5,160.1 L201.6,157.9 L206.7,159.7 L211.8,159.8 L213.8,160.5 L222.2,122.4 L227.3,117.3 L231.8,125.6 L237.1,49.4 L241.9,71.6 L251.8,100.2 L255.6,131.9 L258.9,144.6 L266.7,160.5 L272.7,160.0 L277.7,156.8 L282.8,158.6 L287.9,157.5 L293.0,160.3 L298.0,158.5 L303.1,160.4 L308.2,158.5 L313.3,157.1 L318.3,159.6 L323.4,159.9 L328.5,158.6 L333.6,158.7 L338.6,157.3 L343.7,158.8 L348.8,160.0 L353.9,160.3 L358.9,159.1 L364.0,159.1 L369.1,157.3 L374.2,160.4 L379.2,160.0 L384.3,160.3 L389.4,159.3 L394.5,158.2 L399.5,159.4 L404.6,156.8 L409.7,156.8 L414.8,158.0 L419.8,157.8 L424.9,157.2 L430.0,160.3 L435.1,159.9 L440.1,157.7 L445.2,160.2 L450.3,159.4 L455.4,158.8 L460.4,158.8 L465.5,158.3 L470.6,157.5 L475.7,160.3 L475.7,160.5 Z" fill="#EAB839" fill-opacity="0.1" stroke="none"/><path d="M39.2,159.4 L44.3,160.1 L49.4,159.4 L54.4,159.5 L59.5,159.7 L64.6,159.9 L69.7,159.0 L74.7,160.5 L79.8,159.6 L84.9,159.9 L90.0,160.5 L95.0,160.4 L97.4,160.5 L102.5,146.5 L107.6,109.7 L117.1,108.4 L122.2,146.5 L127.0,160.5 L130.6,159.6 L135.6,159.8 L140.7,160.1 L145.8,160.4 L150.9,160.1 L155.9,160.1 L161.0,159.7 L166.1,160.1 L171.2,160.1 L176.2,160.1 L181.3,159.3 L186.4,160.2 L191.5,159.9 L196.5,159.8 L201.6,160.0 L206.7,160.4 L211.8,160.3 L216.8,159.6 L221.3,157.3 L227.3,122.4 L237.1,106.5 L245.2,147.8 L252.4,159.7 L257.4,159.9 L262.5,158.6 L267.6,160.0 L272.7,160.2 L277.7,160.4 L282.8,159.4 L287.9,159.4 L293.0,159.6 L298.0,160.0 L303.1,158.8 L308.2,160.2 L313.3,159.7 L318.3,160.1 L323.4,159.6 L328.5,158.7 L333.6,159.9 L338.6,160.3 L343.7,158.7 L348.8,159.2 L353.9,158.9 L358.9,159.9 L364.0,159.1 L369.1,160.1 L374.2,158.9 L379.2,160.2 L384.3,160.3 L389.4,160.0 L394.5,160.4 L399.5,159.8 L404.6,160.2 L409.7,158.8 L414.8,159.9 L419.8,159.9 L424.9,160.4 L430.0,158.8 L435.1,159.6 L440.1,159.3 L445.2,159.1 L450.3,158.6 L455.4,159.5 L460.4,159.6 L465.5,159.8 L470.6,159.6 L475.7,159.2" fill="none" stroke="#705DA0" stroke-width="1" stroke-linejoin="round"/><path d="M39.2,159.2 L44.3,160.4 L49.4,159.8 L54.4,159.0 L59.5,159.9 L64.6,159.2 L69.7,159.7 L74.7,158.8 L79.8,158.9 L84.9,159.2 L90.0,159.7 L95.0,160.5 L100.1,158.8 L105.2,160.3 L110.3,159.6 L115.3,159.7 L120.4,159.9 L125.5,160.3 L130.6,160.5 L135.6,158.9 L140.7,159.7 L145.8,159.6 L150.9,160.4 L155.9,159.6 L161.0,159.9 L166.1,159.8 L172.0,160.5 L176.5,154.2 L181.6,108.4 L186.4,107.8 L190.9,128.8 L195.9,157.3 L201.6,159.7 L206.7,159.0 L211.8,159.5 L218.3,157.3 L227.3,123.7 L237.1,97.0 L243.7,122.4 L251.2,141.4 L257.1,158.6 L262.5,159.6 L267.6,160.0 L272.7,160.2 L277.7,160.5 L282.8,159.3 L287.9,159.5 L293.0,160.5 L298.0,159.0 L303.1,159.9 L308.2,159.5 L313.3,159.3 L318.3,158.7 L323.4,160.3 L328.5,158.8 L333.6,158.7 L338.6,159.2 L343.7,160.3 L348.8,160.0 L353.9,159.8 L358.9,158.8 L364.0,160.0 L369.1,158.6 L374.2,159.3 L379.2,159.6 L384.3,160.1 L389.4,158.8 L394.5,159.9 L399.5,159.8 L404.6,160.0 L409.7,159.1 L414.8,159.7 L419.8,159.6 L424.9,159.0 L430.0,160.3 L435.1,159.9 L440.1,159.8 L445.2,159.3 L450.3,159.5 L455.4,160.1 L460.4,159.7 L465.5,159.2 L470.6,160.3 L475.7,159.2" fill="none" stroke="#BA43A9" stroke-width="1" stroke-linejoin="round"/><path d="M39.2,158.8 L44.3,159.7 L49.4,159.9 L54.4,159.9 L59.5,160.4 L64.6,160.0 L69.7,159.4 L74.7,159.9 L79.8,159.8 L84.9,158.3 L90.0,159.7 L95.0,159.8 L100.1,159.7 L105.2,158.3 L110.3,158.6 L115.3,159.4 L120.4,159.4 L125.5,160.2 L130.6,159.7 L135.6,159.8 L140.7,158.6 L145.8,158.8 L150.9,160.1 L155.9,159.2 L161.0,159.3 L166.1,160.1 L171.2,159.3 L176.2,159.9 L181.3,159.6 L186.4,158.8 L191.5,160.1 L196.5,159.6 L201.6,160.1 L206.7,159.7 L211.8,160.3 L213.8,158.6 L222.2,131.9 L227.3,125.6 L231.8,131.9 L237.1,112.9 L245.2,131.9 L254.1,151.0 L258.6,159.2 L262.5,159.7 L267.6,158.8 L272.7,159.9 L277.7,158.9 L282.8,159.1 L287.9,159.4 L293.0,160.3 L298.0,158.0 L303.1,159.7 L308.2,159.0 L313.3,159.3 L318.3,158.4 L323.4,159.6 L328.5,158.0 L333.6,159.3 L338.6,160.2 L343.7,159.2 L348.8,159.8 L353.9,158.8 L358.9,160.3 L364.0,159.6 L369.1,159.8 L374.2,159.6 L379.2,159.5 L384.3,158.6 L389.4,160.5 L394.5,160.3 L399.5,159.1 L404.6,159.8 L409.7,160.2 L414.8,160.4 L419.8,160.3 L424.9,159.5 L430.0,160.2 L435.1,159.4 L440.1,159.6 L445.2,159.1 L450.3,158.5 L455.4,158.2 L460.4,160.2 L465.5,159.9 L470.6,160.4 L475.7,159.6" fill="none" stroke="#7EB26D" stroke-width="1" stroke-linejoin="round"/><path d="M39.2,158.7 L44.3,159.6 L49.4,159.9 L54.4,159.9 L59.5,158.8 L64.6,158.5 L69.7,159.9 L74.7,160.2 L79.8,158.5 L84.9,160.4 L90.0,158.8 L95.0,158.8 L100.1,159.6 L105.2,160.0 L110.3,160.1 L115.3,160.1 L120.4,159.7 L125.5,160.4 L130.6,158.9 L135.6,160.3 L140.7,160.0 L145.8,159.4 L150.9,158.5 L155.9,160.2 L161.0,160.4 L166.1,160.4 L171.2,160.4 L176.2,160.3 L181.3,158.8 L186.4,159.3 L191.5,159.4 L196.5,160.3 L201.6,159.9 L206.7,159.6 L211.8,160.1 L213.8,158.6 L222.2,123.7 L227.3,122.4 L231.8,141.4 L237.1,154.2 L241.9,140.2 L246.7,141.4 L254.1,155.4 L262.5,159.9 L267.6,158.1 L272.7,159.9 L277.7,160.1 L282.8,159.9 L287.9,160.2 L293.0,159.0 L298.0,160.2 L303.1,160.1 L308.2,159.0 L313.3,159.8 L318.3,158.4 L323.4,159.5 L328.5,160.0 L333.6,160.2 L338.6,159.9 L343.7,158.1 L348.8,159.6 L353.9,160.2 L358.9,158.7 L364.0,159.8 L369.1,159.1 L374.2,158.5 L379.2,159.6 L384.3,160.2 L389.4,160.1 L394.5,160.4 L399.5,160.3 L404.6,159.9 L409.7,158.1 L414.8,160.0 L419.8,159.5 L424.9,159.3 L430.0,159.7 L435.1,158.8 L440.1,160.0 L445.2,158.3 L450.3,158.0 L455.4,159.7 L460.4,160.4 L465.5,160.2 L470.6,159.5 L475.7,160.5" fill="none" stroke="#EF843C" stroke-width="1" stroke-linejoin="round"/><path d="M39.2,160.5 L44.3,160.3 L49.4,160.5 L54.4,159.9 L59.5,159.5 L64.6,159.9 L69.7,160.2 L74.7,160.1 L79.8,159.7 L84.9,160.3 L90.0,160.0 L95.0,159.6 L100.1,160.3 L105.2,159.8 L110.3,158.7 L115.3,160.1 L120.4,159.6 L125.5,158.7 L130.6,160.2 L135.6,158.7 L140.7,159.8 L145.8,159.6 L150.9,160.4 L155.9,160.4 L161.0,158.9 L166.1,159.7 L171.2,160.2 L176.2,160.2 L181.3,159.9 L186.4,160.2 L191.5,160.2 L196.5,160.4 L201.6,159.7 L206.7,160.3 L211.8,159.8 L213.8,158.6 L222.2,123.7 L227.3,121.1 L233.2,146.5 L237.1,152.9 L241.9,138.3 L248.2,144.6 L255.6,158.6 L262.5,160.3 L267.6,160.5 L272.7,159.3 L277.7,159.8 L282.8,159.8 L287.9,159.9 L293.0,159.7 L298.0,159.6 L303.1,159.2 L308.2,159.8 L313.3,160.2 L318.3,158.6 L323.4,158.8 L328.5,160.2 L333.6,159.3 L338.6,160.2 L343.7,160.2 L348.8,159.8 L353.9,158.9 L358.9,159.9 L364.0,160.4 L369.1,159.8 L374.2,160.0 L379.2,158.8 L384.3,159.0 L389.4,159.0 L394.5,159.3 L399.5,159.9 L404.6,159.5 L409.7,160.1 L414.8,159.4 L419.8,160.3 L424.9,159.6 L430.0,159.2 L435.1,160.2 L440.1,159.6 L445.2,160.1 L450.3,160.3 L455.4,158.6 L460.4,158.8 L465.5,159.8 L470.6,159.3 L475.7,159.2" fill="none" stroke="#E24D42" stroke-width="1" stroke-linejoin="round"/><path d="M39.2,159.6 L44.3,159.6 L49.4,159.2 L54.4,159.3 L59.5,159.9 L64.6,160.2 L69.7,160.2 L74.7,159.6 L79.8,158.8 L84.9,159.9 L90.0,159.6 L95.0,160.2 L100.1,159.9 L105.2,159.0 L110.3,159.7 L115.3,159.6 L120.4,160.4 L125.5,159.7 L130.6,160.0 L135.6,160.2 L140.7,159.6 L145.8,159.2 L150.9,160.5 L155.9,160.0 L161.0,160.0 L166.1,160.1 L171.2,160.0 L176.2,160.2 L181.3,159.7 L186.4,159.5 L191.5,160.1 L196.5,159.5 L201.6,159.8 L206.7,159.7 L211.8,160.3 L213.8,159.2 L216.8,114.8 L221.6,146.5 L226.7,122.4 L236.2,144.6 L241.9,135.1 L248.2,158.6 L257.1,160.5 L262.5,160.4 L267.6,159.1 L272.7,160.4 L277.7,160.1 L282.8,159.6 L287.9,160.3 L294.4,160.5 L299.2,151.0 L303.4,160.5 L308.2,158.8 L313.3,160.1 L318.3,160.1 L323.4,159.7 L328.5,160.3 L333.6,160.5 L338.6,159.9 L343.7,160.4 L348.8,160.2 L353.9,159.5 L358.9,159.4 L364.0,159.6 L369.1,159.3 L374.2,159.8 L379.2,159.6 L384.3,159.8 L389.4,159.9 L394.5,159.1 L399.5,159.8 L404.6,159.6 L409.7,159.9 L414.8,159.7 L419.8,160.4 L424.9,160.5 L430.0,160.4 L435.1,159.8 L440.1,159.5 L445.2,159.7 L450.3,159.9 L455.4,159.6 L460.4,159.3 L465.5,160.0 L470.6,159.4 L475.7,159.1" fill="none" stroke="#6ED0E0" stroke-width="1" stroke-linejoin="round"/><path d="M39.2,159.5 L44.3,160.2 L49.4,159.8 L54.4,160.4 L59.5,160.0 L64.6,160.3 L69.7,160.1 L74.7,159.6 L79.8,159.2 L84.9,159.5 L90.0,160.4 L95.0,160.0 L100.1,160.3 L105.2,159.4 L110.3,160.2 L115.3,159.3 L120.4,159.2 L125.5,159.5 L130.6,159.6 L135.6,160.0 L140.7,159.5 L145.8,159.3 L150.9,159.5 L155.9,160.3 L161.0,159.3 L166.1,160.0 L171.2,159.5 L176.2,159.7 L181.3,159.8 L186.4,159.7 L191.5,160.2 L196.5,159.3 L201.6,160.2 L206.7,159.5 L211.8,159.9 L215.3,159.2 L224.3,128.8 L231.8,144.6 L237.1,152.9 L241.9,144.0 L246.7,159.2 L262.5,160.2 L267.6,160.0 L272.7,159.6 L277.7,160.5 L282.8,160.4 L287.9,159.7 L293.0,160.1 L298.0,160.4 L303.1,160.3 L308.2,160.2 L313.3,160.1 L318.3,160.0 L323.4,159.9 L328.5,159.8 L333.6,159.3 L338.6,160.3 L343.7,160.3 L348.8,160.5 L353.9,160.0 L358.9,159.4 L364.0,159.8 L369.1,160.0 L374.2,160.1 L379.2,159.8 L384.3,160.0 L389.4,159.8 L394.5,160.3 L399.5,159.6 L404.6,160.1 L409.7,159.9 L414.8,159.9 L419.8,160.2 L424.9,159.7 L430.0,159.5 L435.1,160.2 L440.1,159.6 L445.2,159.9 L450.3,159.9 L455.4,160.4 L460.4,159.7 L465.5,159.8 L470.6,160.3 L475.7,159.7" fill="none" stroke="#1F78C1" stroke-width="1" stroke-linejoin="round"/><path d="M39.2,159.7 L44.3,160.2 L49.4,159.9 L54.4,159.9 L59.5,160.2 L64.6,160.2 L69.7,159.8 L74.7,159.6 L79.8,160.2 L84.9,160.0 L90.0,159.6 L95.0,159.7 L100.1,160.1 L105.2,159.3 L110.3,159.6 L115.3,159.7 L120.4,159.5 L125.5,160.1 L130.6,159.9 L135.6,160.4 L140.7,159.9 L145.8,160.2 L150.9,160.1 L155.9,159.9 L161.0,159.6 L166.1,159.8 L171.2,159.5 L176.2,160.0 L181.3,160.3 L186.4,160.4 L191.5,160.0 L196.5,159.3 L201.6,159.7 L206.7,159.9 L211.8,159.2 L216.8,159.6 L221.9,160.0 L227.0,160.3 L232.1,160.2 L237.1,159.6 L242.2,160.1 L247.3,160.2 L252.4,159.2 L257.1,160.5 L266.7,109.7 L271.8,111.0 L277.4,106.5 L282.8,109.7 L287.3,109.7 L291.8,107.8 L296.2,160.5 L303.1,159.4 L308.2,160.4 L313.3,159.5 L318.3,159.8 L323.4,160.4 L328.5,159.6 L333.6,159.8 L338.6,160.0 L343.7,160.3 L348.8,159.4 L353.9,159.7 L358.9,160.1 L364.0,160.4 L369.1,159.7 L374.2,159.8 L379.2,160.0 L384.3,159.6 L389.4,160.5 L394.5,159.7 L399.5,160.2 L404.6,160.2 L409.7,160.3 L414.8,160.1 L419.8,159.4 L424.9,160.3 L430.0,159.8 L435.1,160.4 L440.1,159.7 L445.2,159.6 L450.3,159.3 L455.4,160.0 L460.4,159.7 L465.5,159.3 L470.6,159.7 L475.7,160.1" fill="none" stroke="#508642" stroke-width="1" stroke-linejoin="round"/><path d="M39.2,159.8 L44.3,158.6 L49.4,156.7 L54.4,159.9 L59.5,159.5 L64.6,159.5 L69.7,159.3 L74.7,158.3 L79.8,160.2 L84.9,158.4 L90.0,157.7 L95.0,160.1 L100.1,157.7 L105.2,160.1 L110.3,160.2 L115.3,159.7 L120.4,159.6 L125.5,158.4 L130.6,159.7 L135.6,160.0 L140.7,160.4 L145.8,160.5 L150.9,158.7 L155.9,158.7 L161.0,159.1 L166.1,159.7 L171.2,160.3 L176.2,159.1 L181.3,157.8 L186.4,160.0 L191.5,159.0 L196.5,160.1 L201.6,157.9 L206.7,159.7 L211.8,159.8 L213.8,160.5 L222.2,122.4 L227.3,117.3 L231.8,125.6 L237.1,49.4 L241.9,71.6 L251.8,100.2 L255.6,131.9 L258.9,144.6 L266.7,160.5 L272.7,160.0 L277.7,156.8 L282.8,158.6 L287.9,157.5 L293.0,160.3 L298.0,158.5 L303.1,160.4 L308.2,158.5 L313.3,157.1 L318.3,159.6 L323.4,159.9 L328.5,158.6 L333.6,158.7 L338.6,157.3 L343.7,158.8 L348.8,160.0 L353.9,160.3 L358.9,159.1 L364.0,159.1 L369.1,157.3 L374.2,160.4 L379.2,160.0 L384.3,160.3 L389.4,159.3 L394.5,158.2 L399.5,159.4 L404.6,156.8 L409.7,156.8 L414.8,158.0 L419.8,157.8 L424.9,157.2 L430.0,160.3 L435.1,159.9 L440.1,157.7 L445.2,160.2 L450.3,159.4 L455.4,158.8 L460.4,158.8 L465.5,158.3 L470.6,157.5 L475.7,160.3" fill="none" stroke="#EAB839" stroke-width="1" stroke-linejoin="round"/><text transform="translate(17,102) rotate(-90)" class="yrot">ops/s</text></svg><div class="legend"><span class="li"><i style="background:#7EB26D"></i>sdb-w</span><span class="li"><i style="background:#EAB839"></i>sdc-w</span><span class="li"><i style="background:#6ED0E0"></i>sdd-w</span><span class="li"><i style="background:#EF843C"></i>sde-w</span><span class="li"><i style="background:#E24D42"></i>sdf-w</span><span class="li"><i style="background:#1F78C1"></i>sdb-r</span><span class="li"><i style="background:#BA43A9"></i>sdc-r</span><span class="li"><i style="background:#705DA0"></i>sdd-r</span><span class="li"><i style="background:#508642"></i>sde-r</span><span class="li"><i style="background:#CCA300"></i>sdf-r</span></div><div class="lscroll"></div><div class="resz"></div></div><div class="panel" style="left:58px;top:789px;width:504px;height:201px"><div class="ptitle">Disk Utilization</div><svg class="chart" width="504" height="201" viewBox="0 0 504 201"><line x1="31" y1="33.5" x2="487" y2="33.5" class="g"/><text x="26" y="36.2" class="yl">150%</text><line x1="31" y1="65.5" x2="487" y2="65.5" class="g"/><text x="26" y="68.2" class="yl">100%</text><line x1="31" y1="97.5" x2="487" y2="97.5" class="g"/><text x="26" y="100.2" class="yl">50%</text><line x1="31" y1="129.5" x2="487" y2="129.5" class="g"/><text x="26" y="132.2" class="yl">0%</text><line x1="65.5" y1="33" x2="65.5" y2="160" class="g"/><text x="65.5" y="173" class="xl">18:26</text><line x1="126.5" y1="33" x2="126.5" y2="160" class="g"/><text x="126.3" y="173" class="xl">18:28</text><line x1="187.5" y1="33" x2="187.5" y2="160" class="g"/><text x="187.1" y="173" class="xl">18:30</text><line x1="248.5" y1="33" x2="248.5" y2="160" class="g"/><text x="247.9" y="173" class="xl">18:32</text><line x1="309.5" y1="33" x2="309.5" y2="160" class="g"/><text x="308.7" y="173" class="xl">18:34</text><line x1="369.5" y1="33" x2="369.5" y2="160" class="g"/><text x="369.5" y="173" class="xl">18:36</text><line x1="430.5" y1="33" x2="430.5" y2="160" class="g"/><text x="430.3" y="173" class="xl">18:38</text></svg><div class="legend"></div></div><div class="panel" style="left:571px;top:789px;width:504px;height:201px"><div class="ptitle">Disk Queue Length</div><svg class="chart" width="504" height="201" viewBox="0 0 504 201"><line x1="16.700000000000045" y1="33.5" x2="487" y2="33.5" class="g"/><text x="11.700000000000045" y="36.2" class="yl">4</text><line x1="16.700000000000045" y1="57.5" x2="487" y2="57.5" class="g"/><text x="11.700000000000045" y="60.2" class="yl">3</text><line x1="16.700000000000045" y1="81.5" x2="487" y2="81.5" class="g"/><text x="11.700000000000045" y="84.2" class="yl">2</text><line x1="16.700000000000045" y1="105.5" x2="487" y2="105.5" class="g"/><text x="11.700000000000045" y="108.2" class="yl">1</text><line x1="16.700000000000045" y1="129.5" x2="487" y2="129.5" class="g"/><text x="11.700000000000045" y="132.2" class="yl">0</text><line x1="16.700000000000045" y1="153.5" x2="487" y2="153.5" class="g"/><text x="11.700000000000045" y="156.2" class="yl">-1</text><line x1="52.5" y1="33" x2="52.5" y2="160" class="g"/><text x="52.2" y="173" class="xl">18:26</text><line x1="115.5" y1="33" x2="115.5" y2="160" class="g"/><text x="114.9" y="173" class="xl">18:28</text><line x1="178.5" y1="33" x2="178.5" y2="160" class="g"/><text x="177.6" y="173" class="xl">18:30</text><line x1="240.5" y1="33" x2="240.5" y2="160" class="g"/><text x="240.4" y="173" class="xl">18:32</text><line x1="303.5" y1="33" x2="303.5" y2="160" class="g"/><text x="303.1" y="173" class="xl">18:34</text><line x1="366.5" y1="33" x2="366.5" y2="160" class="g"/><text x="365.8" y="173" class="xl">18:36</text><line x1="428.5" y1="33" x2="428.5" y2="160" class="g"/><text x="428.5" y="173" class="xl">18:38</text><path d="M16.7,129.5 L16.7,129.5 L98.2,129.5 L104.5,39.5 L110.8,129.5 L475.7,129.5 L475.7,129.5 Z" fill="#E24D42" fill-opacity="0.55" stroke="none"/><path d="M16.7,129.5 L16.7,129.5 L98.8,129.5 L104.5,50.3 L110.1,129.5 L475.7,129.5 L475.7,129.5 Z" fill="#EF843C" fill-opacity="0.6" stroke="none"/><path d="M16.7,129.5 L16.7,129.5 L102.9,129.5 L104.5,76.7 L106.1,129.5 L475.7,129.5 L475.7,129.5 Z" fill="#6ED0E0" fill-opacity="0" stroke="none"/><path d="M16.7,129.5 L98.2,129.5 L104.5,39.5 L110.8,129.5 L475.7,129.5" fill="none" stroke="#E24D42" stroke-width="1" stroke-linejoin="round"/><path d="M16.7,129.5 L98.8,129.5 L104.5,50.3 L110.1,129.5 L475.7,129.5" fill="none" stroke="#EF843C" stroke-width="1" stroke-linejoin="round"/><path d="M16.7,129.5 L102.9,129.5 L104.5,76.7 L106.1,129.5 L475.7,129.5" fill="none" stroke="#6ED0E0" stroke-width="1" stroke-linejoin="round"/></svg><div class="legend"></div></div><div class="panel" style="left:1084px;top:789px;width:504px;height:201px"><div class="ptitle">Disk Throughput</div><svg class="chart" width="504" height="201" viewBox="0 0 504 201"><line x1="47" y1="33.5" x2="487" y2="33.5" class="g"/><text x="42" y="36.2" class="yl">1.25K ops</text><line x1="47" y1="58.5" x2="487" y2="58.5" class="g"/><text x="42" y="60.8" class="yl">1.00K ops</text><line x1="47" y1="82.5" x2="487" y2="82.5" class="g"/><text x="42" y="85.4" class="yl">750 ops</text><line x1="47" y1="107.5" x2="487" y2="107.5" class="g"/><text x="42" y="110.0" class="yl">500 ops</text><line x1="47" y1="131.5" x2="487" y2="131.5" class="g"/><text x="42" y="134.6" class="yl">250 ops</text><line x1="47" y1="156.5" x2="487" y2="156.5" class="g"/><text x="42" y="159.2" class="yl">0 ops</text><line x1="80.5" y1="33" x2="80.5" y2="160" class="g"/><text x="80.2" y="173" class="xl">18:26</text><line x1="139.5" y1="33" x2="139.5" y2="160" class="g"/><text x="138.9" y="173" class="xl">18:28</text><line x1="198.5" y1="33" x2="198.5" y2="160" class="g"/><text x="197.6" y="173" class="xl">18:30</text><line x1="256.5" y1="33" x2="256.5" y2="160" class="g"/><text x="256.2" y="173" class="xl">18:32</text><line x1="315.5" y1="33" x2="315.5" y2="160" class="g"/><text x="314.9" y="173" class="xl">18:34</text><line x1="374.5" y1="33" x2="374.5" y2="160" class="g"/><text x="373.6" y="173" class="xl">18:36</text><line x1="432.5" y1="33" x2="432.5" y2="160" class="g"/><text x="432.2" y="173" class="xl">18:38</text><path d="M47.0,156.5 L47.0,156.5 L236.2,156.5 L242.4,46.3 L248.5,156.5 L476.4,156.5 L476.4,156.5 Z" fill="#7EB26D" fill-opacity="0.1" stroke="none"/><path d="M47.0,156.5 L236.2,156.5 L242.4,46.3 L248.5,156.5 L476.4,156.5" fill="none" stroke="#7EB26D" stroke-width="1" stroke-linejoin="round"/></svg><div class="legend"></div></div><div class="abs" style="left:240px;top:34px;width:256px;height:60px;background:#fff;border-radius:8px;box-shadow:0 0 0 1px rgba(0,0,0,0.16),0 2px 3px rgba(0,0,0,0.18)"></div><div class="abs" style="left:258px;top:46px;font-size:13.3px;-webkit-text-stroke:0.3px #202124;line-height:17px;color:#202124;white-space:nowrap">Partial_Monitoring - Grafana</div><div class="abs" style="left:258px;top:67px;font-size:12.3px;line-height:16px;color:#5f6368;white-space:nowrap">10.110.253.51:3000</div><div class="abs" style="left:0;top:859px;width:1600px;height:41px;background:#63c9ef;border-top:1px solid #16191d"></div><svg class="abs" style="left:11px;top:866px" width="28" height="28" viewBox="0 0 28 28"><path d="M0 4L11.5 2.4V13.3H0Z M13 2.2L28 0V13.3H13Z M0 14.7H11.5V25.6L0 24Z M13 14.7H28V28L13 25.8Z" fill="#fff"/></svg><svg class="abs" style="left:64px;top:863px" width="34" height="35" viewBox="0 0 34 35"><rect x="1" y="1" width="15" height="30" fill="#1c7fd6"/><rect x="3" y="3" width="11" height="3" fill="#5ab0f0"/><rect x="6" y="19" width="26" height="15" rx="1.5" fill="#6e8aa0" stroke="#fff" stroke-width="1.2"/><rect x="14" y="16" width="10" height="4" fill="none" stroke="#fff" stroke-width="1.2"/><path d="M8 25H30" stroke="#fff" stroke-width="1"/></svg><svg class="abs" style="left:129px;top:867px" width="28" height="26" viewBox="0 0 28 26"><path d="M5 1H27L23 25H1Z" fill="#2671be" stroke="#1a4f8a" stroke-width="0.8"/><path d="M8 6L15 12.5L7 19" fill="none" stroke="#fff" stroke-width="2.6"/><path d="M13 20H19" stroke="#fff" stroke-width="1.8"/></svg><div class="abs" style="left:175px;top:860px;width:60px;height:40px;background:#76d1ef;border-left:1px solid #2f6f88;border-right:1px solid #2f6f88"></div><svg class="abs" style="left:188px;top:866px" width="34" height="30" viewBox="0 0 34 30"><path d="M1 4Q1 2 3 2H11L13 4H31Q33 4 33 6V27Q33 29 31 29H3Q1 29 1 27Z" fill="#e8c66a"/><rect x="5" y="3" width="13" height="6" fill="#fff"/><rect x="6" y="3.5" width="3" height="2" fill="#1c1"/><rect x="12" y="5" width="11" height="6" fill="#fff"/><rect x="13" y="5.5" width="3" height="2" fill="#d22"/><rect x="19" y="7" width="12" height="6" fill="#fff"/><rect x="20" y="7.5" width="3" height="2" fill="#29f"/><path d="M1 11H33V27Q33 29 31 29H3Q1 29 1 27Z" fill="#f7e08f"/><path d="M5 29V21Q5 19 7 19H27Q29 19 29 21V29H23V25H11V29Z" fill="#9fd3f2" stroke="#5aa5d8" stroke-width="1"/></svg><svg class="abs" style="left:252px;top:865px" width="30" height="30" viewBox="0 0 30 30"><rect x="0" y="0" width="30" height="30" fill="#008a00"/><path d="M10.5 9C10.5 5 12.5 3 15 3C17.5 3 19.5 5 19.5 9" fill="none" stroke="#fff" stroke-width="1.4"/><path d="M7 9H25L24 26H8L5 24Z" fill="#fff"/><rect x="8" y="13" width="5.5" height="5" fill="#008a00"/><rect x="14.5" y="13" width="5.5" height="5" fill="#008a00"/><rect x="8" y="19" width="5.5" height="5" fill="#008a00"/><rect x="14.5" y="19" width="5.5" height="5" fill="#008a00"/></svg><div class="abs" style="left:299px;top:860px;width:60px;height:40px;background:#9edff5;border-left:1px solid #2f6f88;border-right:1px solid #2f6f88"></div><svg class="abs" style="left:314px;top:865px" width="30" height="30" viewBox="0 0 30 30"><circle cx="15" cy="15" r="14.5" fill="#db4437"/><path d="M15 15L2.4 7.8A14.5 14.5 0 0 0 8 27.7Z" fill="#0f9d58"/><path d="M15 15L8 27.7A14.5 14.5 0 0 0 29.5 15L27.6 7.8Z" fill="#ffcd40"/><path d="M15 15L27.6 7.8H15Z" fill="#db4437"/><circle cx="15" cy="15" r="6.6" fill="#fff"/><circle cx="15" cy="15" r="5.2" fill="#4285f4"/></svg><svg class="abs" style="left:1410px;top:872px" width="18" height="18" viewBox="0 0 18 18"><path d="M1.5 1V17" stroke="#fff" stroke-width="1.5"/><path d="M2 2H11L10 5H15L13 11H2Z" fill="#fff" stroke="#666" stroke-width="0.6"/><circle cx="12.5" cy="12.5" r="4.5" fill="#e33"/><path d="M10.5 10.5L14.5 14.5M14.5 10.5L10.5 14.5" stroke="#fff" stroke-width="1.3"/></svg><svg class="abs" style="left:1435px;top:872px" width="18" height="18" viewBox="0 0 18 18"><rect x="5" y="2" width="11" height="11" fill="none" stroke="#333" stroke-width="1"/><circle cx="4" cy="4.5" r="2.5" fill="#fff" stroke="#333" stroke-width="0.8"/><path d="M4 7V16" stroke="#333" stroke-width="1.5"/><path d="M11 9L16 17H6Z" fill="#f5c400"/><path d="M11 11.5V14.5" stroke="#000" stroke-width="1"/></svg><svg class="abs" style="left:1459px;top:872px" width="18" height="18" viewBox="0 0 18 18"><path d="M1 6H4L9 1V16L4 11H1Z" fill="#fff" stroke="#555" stroke-width="0.6"/><circle cx="12.5" cy="12.5" r="4.5" fill="#e33"/><path d="M10.5 10.5L14.5 14.5M14.5 10.5L10.5 14.5" stroke="#fff" stroke-width="1.3"/></svg><div class="abs" style="left:1489px;top:873px;font-size:12px;letter-spacing:-0.2px;line-height:15px;color:#000">ENG</div><div class="abs" style="left:1521px;top:865px;width:60px;font-size:11.2px;line-height:15px;color:#000;text-align:right;white-space:nowrap">06:39 &#1576;.&#1592;</div><div class="abs" style="left:1519px;top:881px;width:60px;font-size:11px;line-height:15px;color:#000;text-align:right;white-space:nowrap">&#1634;&#1632;&#1634;&#1633;/&#1632;&#1639;/&#1633;&#1634;</div><div class="abs" style="left:1598px;top:860px;width:1px;height:40px;background:#3d5866"></div><div class="abs" style="left:0;top:899px;width:1600px;height:1px;background:#4a6470"></div></body></html>
